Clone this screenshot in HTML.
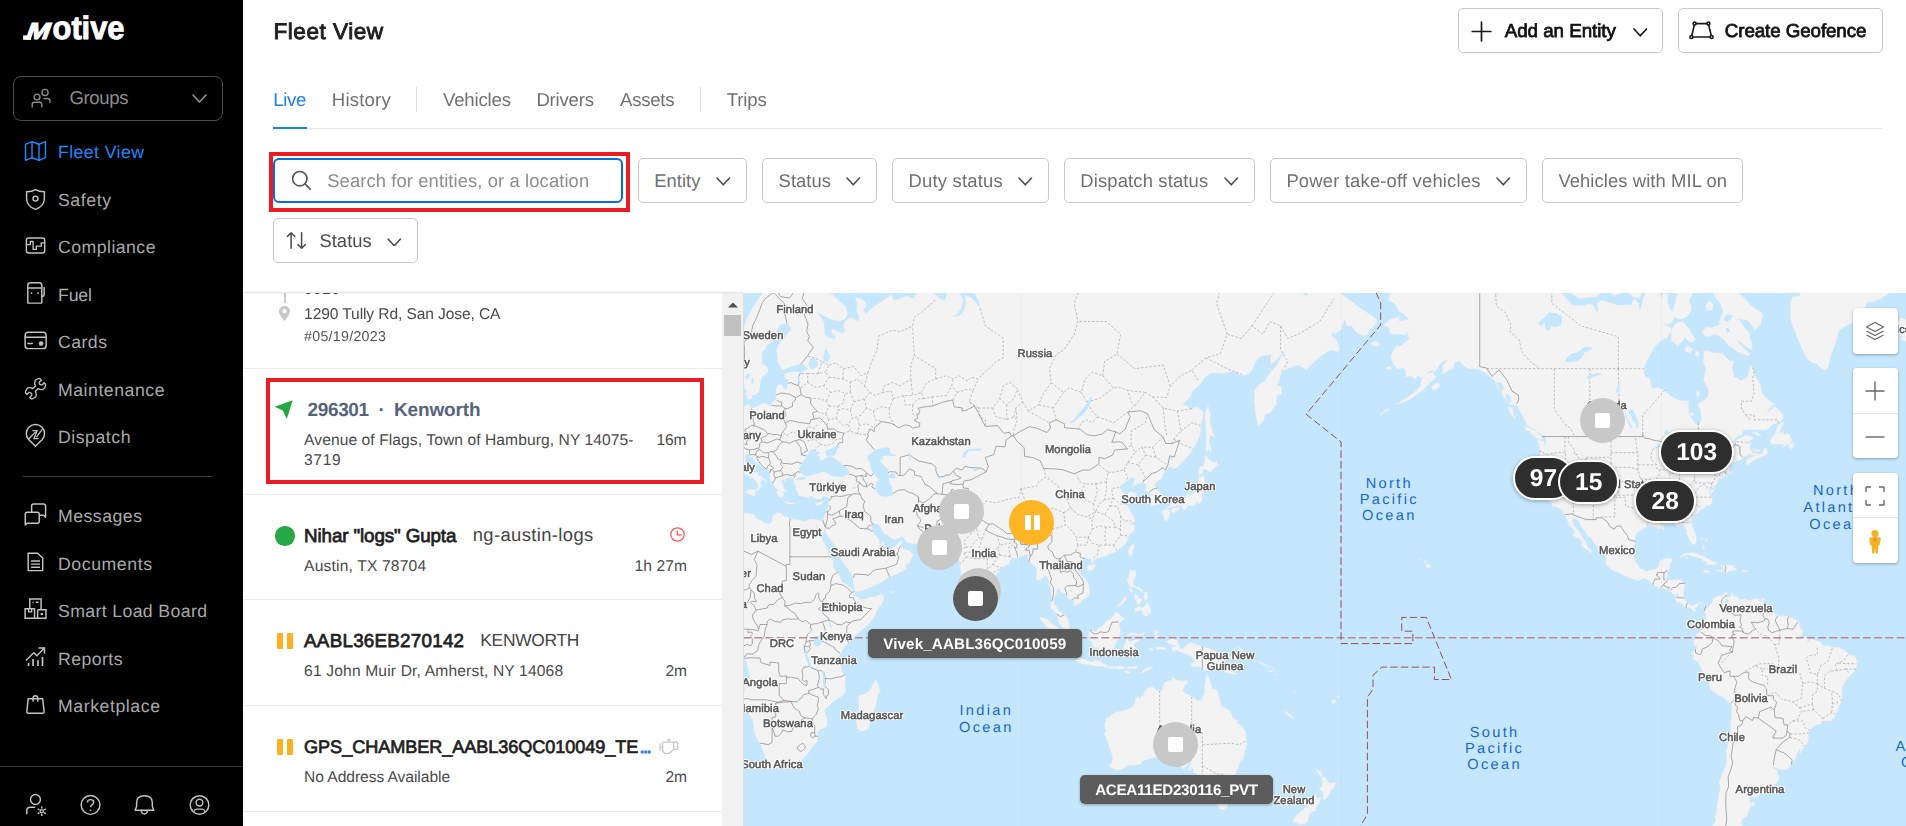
<!DOCTYPE html>
<html lang="en">
<head>
<meta charset="utf-8">
<title>Fleet View</title>
<style>
*{box-sizing:border-box;margin:0;padding:0}
html,body{width:1906px;height:826px;overflow:hidden;background:#fff}
body{background:linear-gradient(to right,#000 243px,#fff 243px)}
body{font-family:"Liberation Sans",sans-serif;color:#222;position:relative;text-rendering:geometricPrecision}
#root{position:absolute;left:0;top:0;width:1906px;height:826px;opacity:.9999}
.abs{position:absolute}
.t{position:absolute;white-space:nowrap;line-height:1}
/* sidebar */
#side{position:absolute;left:0;top:0;width:243px;height:826px;background:#000}
#side .nav{position:absolute;left:58px;font-size:17.6px;color:#a9a9a9;white-space:nowrap;line-height:20px;letter-spacing:.1px}
#side .ico{position:absolute;left:24px;width:23px;height:23px}
#side svg{display:block;overflow:visible}
#groups{position:absolute;left:13px;top:76px;width:210px;height:45px;border:1px solid #4d4d4d;border-radius:8px}
/* header */
.btn{position:absolute;border:1px solid #c9c9c9;border-radius:5px;background:#fff}
.ft{position:absolute;white-space:nowrap;font-size:18.4px;line-height:22px;color:#707070}
/* list */
#list{position:absolute;left:243px;top:293px;width:479px;height:533px;overflow:hidden;background:#fff}
#list .hr{position:absolute;left:0;width:479px;height:1px;background:#ebebeb}
#list .a{position:absolute;white-space:nowrap;font-size:15.4px;line-height:20px;color:#4a4a4a;letter-spacing:.15px}
#list .n{position:absolute;white-space:nowrap;font-size:18.6px;line-height:22px;color:#1f1f1f;font-weight:bold}
#list .m{position:absolute;white-space:nowrap;font-size:18.4px;line-height:22px;color:#444}
#scroll{position:absolute;left:722px;top:293px;width:21px;height:533px;background:#f1f1f1}
/* map */
#map{position:absolute;left:743px;top:293px;width:1163px;height:533px;overflow:hidden;background:#c5e7fe}
#map svg{position:absolute;left:0;top:0}
.ctl{position:absolute;left:1109.5px;width:45.5px;background:#fff;border-radius:4px;box-shadow:0 1px 3px rgba(0,0,0,.3)}
.badge{position:absolute;height:44px;border-radius:22px;background:rgba(45,45,45,.996);border:2px solid #fff;color:#fff;font-weight:bold;font-size:24.5px;line-height:42.4px;text-align:center;box-shadow:0 1px 4px rgba(0,0,0,.35)}
.mk{position:absolute;width:45px;height:45px;border-radius:50%;background:#c8c8c8}
.mk i{position:absolute;left:15px;top:15px;width:15px;height:15px;background:#fff;border-radius:2px}
.ml{position:absolute;transform:translate(-50%,-50%);white-space:nowrap;font-size:11.2px;line-height:12px;color:#585858;letter-spacing:.1px;
-webkit-text-stroke:.55px #585858;text-shadow:-1px -1px 0 #fff,1px -1px 0 #fff,-1px 1px 0 #fff,1px 1px 0 #fff,0 -1.3px 0 #fff,0 1.3px 0 #fff,-1.3px 0 0 #fff,1.3px 0 0 #fff,0 0 2px #fff}
.ml.r{transform:translate(-100%,-50%)}.ml.l{transform:translate(0,-50%)}
.tag{position:absolute;height:29.2px;border-radius:5px;background:rgba(91,91,91,.996);color:#fff;font-weight:bold;font-size:15.2px;line-height:31.4px;text-align:center;box-shadow:0 1px 3px rgba(0,0,0,.3);white-space:nowrap}
.badge,.tag,.ml{will-change:transform}
</style>
</head>
<body>
<div id="root">
<div id="side">
<svg class="abs" style="left:18px;top:10px" width="115" height="38" viewBox="0 0 115 38"><g fill="#fff" font-family="Liberation Sans, sans-serif" font-weight="bold"><rect x="5.1" y="25.4" width="8" height="4.4"/><text transform="translate(6.4 29.3) skewX(-20) scale(1.2 1)" font-size="23.3" stroke="#fff" stroke-width="1.1" stroke-linejoin="miter">M</text><text transform="translate(34.6 29.45) scale(.95 1)" font-size="32.6" letter-spacing="-.1" stroke="#fff" stroke-width=".9">otive</text></g></svg>
<div id="groups"></div>
<svg class="abs" style="left:31px;top:87px;" width="22" height="22" viewBox="0 0 22 22"><g fill="none" stroke="#8c8c8c" stroke-width="1.4" stroke-linecap="round"><circle cx="14" cy="5.5" r="3.1"/><circle cx="6" cy="10" r="2.9"/><path d="M1.2 20 V17.5 Q1.2 15.2 3.5 15.2 H8.5 Q10.8 15.2 10.8 17.5 V20"/><path d="M13 11.5 H16.5 Q19 11.5 19 14 V15.5"/></g></svg>
<div class="t" style="left:69.5px;top:87.3px;font-size:18.6px;line-height:22px;color:#8f8f8f;letter-spacing:-0.397px;">Groups</div>
<svg class="abs" style="left:192.0px;top:94.0px;" width="15" height="9" viewBox="0 0 15 9"><path d="M1 1 L7.5 8 L14 1" fill="none" stroke="#9a9a9a" stroke-width="1.5" stroke-linecap="round" stroke-linejoin="round"/></svg>
<div class="t" style="left:58px;top:141.9px;font-size:17.7px;line-height:21px;color:#1a8cff;letter-spacing:0.415px;">Fleet View</div>
<svg class="abs" style="left:24px;top:139.9px;" width="23" height="23" viewBox="0 0 23 23"><g fill="none" stroke="#1a8cff" stroke-width="1.45" stroke-linecap="round" stroke-linejoin="round"><path d="M1.5 4.3 L8 1.7 L15 4.3 L21.5 1.7 V17.7 L15 20.3 L8 17.7 L1.5 20.3 Z"/><path d="M8 1.7 V17.7 M15 4.3 V20.3"/></g></svg>
<div class="t" style="left:58px;top:189.9px;font-size:17.7px;line-height:21px;color:#ababab;letter-spacing:0.569px;">Safety</div>
<svg class="abs" style="left:24px;top:187.9px;" width="23" height="23" viewBox="0 0 23 23"><g fill="none" stroke="#c4c4c4" stroke-width="1.45" stroke-linecap="round" stroke-linejoin="round"><path d="M11.5 1.6 C9 3.1 6 3.7 2.6 3.7 V10.3 C2.6 16 6.8 19.8 11.5 21.4 C16.2 19.8 20.4 16 20.4 10.3 V3.7 C17 3.7 14 3.1 11.5 1.6 Z"/><circle cx="11.5" cy="10.6" r="2.5"/></g></svg>
<div class="t" style="left:58px;top:237.1px;font-size:17.7px;line-height:21px;color:#ababab;letter-spacing:0.455px;">Compliance</div>
<svg class="abs" style="left:24px;top:235.1px;" width="23" height="23" viewBox="0 0 23 23"><g fill="none" stroke="#c4c4c4" stroke-width="1.45" stroke-linecap="round" stroke-linejoin="round"><rect x="2.4" y="2.9" width="18.3" height="15.1" rx="2.2"/><path d="M2.4 9.6 H6.35 V6.5 H9.1 V14.3 H12.3 V11.1 H17.25 V7.8 H20.7" stroke-width="1.35" stroke-linejoin="miter"/></g></svg>
<div class="t" style="left:58px;top:284.7px;font-size:17.7px;line-height:21px;color:#ababab;letter-spacing:-0.141px;">Fuel</div>
<svg class="abs" style="left:24px;top:282.7px;" width="23" height="23" viewBox="0 0 23 23"><g fill="none" stroke="#c4c4c4" stroke-width="1.45" stroke-linecap="round" stroke-linejoin="round"><path d="M3.8 20.1 V2.3 Q3.8 -.2 6.3 -.2 H15.3 Q17.8 -.2 17.8 2.3 V20.1 Z"/><path d="M3.8 5 H17.8"/><path d="M17.8 13.4 Q20.15 13.4 20.15 10.9 V4.5"/><circle cx="7.6" cy="10.1" r=".9" fill="#c4c4c4" stroke="none"/><circle cx="14" cy="10.1" r=".9" fill="#c4c4c4" stroke="none"/></g></svg>
<div class="t" style="left:58px;top:332.1px;font-size:17.7px;line-height:21px;color:#ababab;letter-spacing:0.453px;">Cards</div>
<svg class="abs" style="left:24px;top:330.1px;" width="23" height="23" viewBox="0 0 23 23"><g fill="none" stroke="#c4c4c4" stroke-width="1.45" stroke-linecap="round" stroke-linejoin="round"><rect x="1.1" y="2.25" width="21.05" height="16.35" rx="3.2"/><path d="M1.1 7.15 H22.15"/><path d="M3.9 13.5 H8.3" stroke-width="1.6"/><circle cx="17.1" cy="13.5" r="2.3" fill="#c4c4c4" stroke="none"/></g></svg>
<div class="t" style="left:58px;top:379.7px;font-size:17.7px;line-height:21px;color:#ababab;letter-spacing:0.522px;">Maintenance</div>
<svg class="abs" style="left:24px;top:377.7px;" width="23" height="23" viewBox="0 0 23 23"><g fill="none" stroke="#c4c4c4" stroke-width="1.45" stroke-linecap="round" stroke-linejoin="round"><path d="M15.6 .4 L17.4 2.3 Q15 3.6 15.1 4.6 Q15 6 15.8 6.3 Q17 7.2 18 6.8 Q19.4 6.2 20 4.8 L21.6 6.3 Q21.8 8.4 20.7 9.7 Q19.9 11 18.7 11.6 Q16.2 11.9 14.2 10.6 L11.3 13.4 Q12.7 15.6 12.2 17.7 Q11.8 18.8 10.7 19.5 Q9.3 20.7 7.6 21 L5.6 19.4 Q7.6 18.3 7.8 17 Q7.9 15.8 7.1 15.2 Q6 14.2 4.9 14.5 Q3.7 15.1 3.1 16.5 L1.45 14.8 Q1.4 13 2.4 11.6 Q3.2 10.4 4.4 9.7 Q6.8 9.3 8.7 10.6 L11.6 7.9 Q10.3 6.3 10.7 4.65 Q10.8 3.2 11.4 2.3 Q13 .8 15.6 .4 Z" stroke-width="1.35"/></g></svg>
<div class="t" style="left:58px;top:427.1px;font-size:17.7px;line-height:21px;color:#ababab;letter-spacing:0.525px;">Dispatch</div>
<svg class="abs" style="left:24px;top:425.1px;" width="23" height="23" viewBox="0 0 23 23"><g fill="none" stroke="#c4c4c4" stroke-width="1.45" stroke-linecap="round" stroke-linejoin="round"><path d="M11.44 21.3 L4.6 14.6 A9.1 9.1 0 1 1 18.28 14.6 Z"/><path d="M8.9 5.65 H13.05 L10 13.6 H14 M4.9 13.8 L11.2 7.1 M12.6 11.8 L18.1 4.6" stroke-width="1.3" stroke-linejoin="miter"/></g></svg>
<div class="t" style="left:58px;top:506.1px;font-size:17.7px;line-height:21px;color:#ababab;letter-spacing:0.482px;">Messages</div>
<svg class="abs" style="left:24px;top:504.1px;" width="23" height="23" viewBox="0 0 23 23"><g fill="none" stroke="#c4c4c4" stroke-width="1.45" stroke-linecap="round" stroke-linejoin="round"><path d="M7.62 8.07 V2.1 Q7.62 .08 9.6 .08 H19.6 Q21.6 .08 21.6 2.1 V13.15 L19.6 11.16 H15.8"/><path d="M3.26 19.15 H13.25 Q15.25 19.15 15.25 17.15 V10.25 Q15.25 8.25 13.25 8.25 H3.27 Q1.27 8.25 1.27 10.25 V20.96 Z"/></g></svg>
<div class="t" style="left:58px;top:553.7px;font-size:17.7px;line-height:21px;color:#ababab;letter-spacing:0.566px;">Documents</div>
<svg class="abs" style="left:24px;top:551.7px;" width="23" height="23" viewBox="0 0 23 23"><g fill="none" stroke="#c4c4c4" stroke-width="1.45" stroke-linecap="round" stroke-linejoin="round"><path d="M4.17 1.2 H13.62 L18.7 6.1 V18.64 H4.17 Z" stroke-linejoin="miter"/><path d="M7.1 9 H16 M7.1 12.1 H16 M7.1 15.2 H16" stroke-width="1.4" stroke-linecap="butt"/></g></svg>
<div class="t" style="left:58px;top:601.1px;font-size:17.7px;line-height:21px;color:#ababab;letter-spacing:0.364px;">Smart Load Board</div>
<svg class="abs" style="left:24px;top:599.1px;" width="23" height="23" viewBox="0 0 23 23"><g fill="none" stroke="#c4c4c4" stroke-width="1.45" stroke-linecap="butt" stroke-linejoin="miter"><path d="M5.8 9.7 V-.1 H17.07 V10.8"/><path d="M1.09 9.7 H10.53 V19.15 H1.09 Z"/><path d="M13.62 10.8 H21.97 V19.15 H10.53"/><path d="M13.62 10.8 V19.15"/><path d="M4.54 9.9 V12.97 H7.62 V9.9" stroke-width="1.3"/><path d="M8.6 3.35 H9.6 M11.6 3.35 H14.5" stroke-width="1.5"/><circle cx="17.8" cy="15" r="1.3" fill="#c4c4c4" stroke="none"/></g></svg>
<div class="t" style="left:58px;top:648.7px;font-size:17.7px;line-height:21px;color:#ababab;letter-spacing:0.427px;">Reports</div>
<svg class="abs" style="left:24px;top:646.7px;" width="23" height="23" viewBox="0 0 23 23"><g fill="none" stroke="#c4c4c4" stroke-width="1.45" stroke-linecap="round" stroke-linejoin="round"><path d="M2.36 13 L9.8 5.74 L12.89 8.83 L20.16 1.3"/><path d="M14.9 1.05 H20.5 V6.1" stroke-linejoin="miter"/><path d="M4.54 19 V16.1 M9.08 19 V11.92 M13.98 19 V13.37 M18.52 19 V9.92" stroke-width="1.7" stroke-linecap="butt"/></g></svg>
<div class="t" style="left:58px;top:696.1px;font-size:17.7px;line-height:21px;color:#ababab;letter-spacing:0.566px;">Marketplace</div>
<svg class="abs" style="left:24px;top:694.1px;" width="23" height="23" viewBox="0 0 23 23"><g fill="none" stroke="#c4c4c4" stroke-width="1.45" stroke-linecap="round" stroke-linejoin="round"><path d="M4.17 4.8 H18.7 L20.1 17.6 Q20.2 19.15 18.6 19.15 H4.3 Q2.7 19.15 2.8 17.6 Z"/><path d="M9.08 7.16 V4.1 Q9.08 1.7 11.44 1.7 Q13.8 1.7 13.8 4.1 V7.16"/></g></svg>
<div class="abs" style="left:23px;top:476px;width:190px;height:1px;background:#3a3a3a"></div>
<div class="abs" style="left:0;top:765.5px;width:243px;height:1px;background:#3a3a3a"></div>
<svg class="abs" style="left:24.0px;top:792.5px;" width="23" height="23" viewBox="0 0 23 23"><g fill="none" stroke="#c4c4c4" stroke-width="1.45" stroke-linecap="round" stroke-linejoin="round"><circle cx="11.46" cy="6.45" r="4.95"/><path d="M2.8 21.2 V17.7 Q2.8 14.3 6.2 14.3 H11.2" stroke-linecap="butt"/><circle cx="17.76" cy="18.26" r="1.7" stroke-width="1.3"/><path d="M17.76 13.6 V15.6 M17.76 20.9 V22.9 M13.7 15.9 L15.45 16.9 M20.05 19.6 L21.8 20.6 M13.7 20.6 L15.45 19.6 M20.05 16.9 L21.8 15.9" stroke-width="1.5" stroke-linecap="butt"/></g></svg>
<svg class="abs" style="left:79.0px;top:792.5px;" width="23" height="23" viewBox="0 0 23 23"><g fill="none" stroke="#c4c4c4" stroke-width="1.45" stroke-linecap="round" stroke-linejoin="round"><circle cx="11.55" cy="11.95" r="9.4"/><path d="M8.4 9.4 Q8.4 6.6 11.55 6.6 Q14.7 6.6 14.7 9.2 Q14.7 10.8 13 11.8 Q11.55 12.6 11.55 14.3" stroke-linecap="butt"/><path d="M11.55 16.6 V18" stroke-width="1.6" stroke-linecap="butt"/></g></svg>
<svg class="abs" style="left:133.0px;top:792.5px;" width="23" height="23" viewBox="0 0 23 23"><g fill="none" stroke="#c4c4c4" stroke-width="1.45" stroke-linecap="round" stroke-linejoin="round"><path d="M2 17.2 H20.9 L19.3 13.6 V9.6 Q19.3 2.8 11.45 2.8 Q3.6 2.8 3.6 9.6 V13.6 Z"/><path d="M8.3 17.5 Q8.6 20.9 11.45 20.9 Q14.3 20.9 14.6 17.5"/></g></svg>
<svg class="abs" style="left:188.0px;top:792.5px;" width="23" height="23" viewBox="0 0 23 23"><g fill="none" stroke="#c4c4c4" stroke-width="1.45" stroke-linecap="round" stroke-linejoin="round"><circle cx="11.5" cy="11.95" r="9.3"/><circle cx="11.5" cy="9.6" r="3.4"/><path d="M6.3 18 Q6.6 16.1 8.8 16.1 H14.2 Q16.4 16.1 16.7 18"/></g></svg>
</div>
<div class="t" style="left:273.5px;top:17.5px;font-size:22.6px;line-height:27px;color:#1f1f1f;letter-spacing:0.502px;-webkit-text-stroke:0.9px #1f1f1f;">Fleet View</div>
<div class="btn" style="left:1458px;top:8.3px;width:204.5px;height:44.4px"></div>
<svg class="abs" style="left:1471px;top:20.5px;" width="21" height="21" viewBox="0 0 21 21"><path d="M10.5 1.2 V19.8 M1.2 10.5 H19.8" stroke="#1a1a1a" stroke-width="1.7" stroke-linecap="round"/></svg>
<div class="t" style="left:1504.7px;top:19.0px;font-size:18.8px;line-height:23px;color:#111;letter-spacing:-0.039px;-webkit-text-stroke:0.75px #111;">Add an Entity</div>
<svg class="abs" style="left:1632.75px;top:27.9px;" width="14.5" height="8.8" viewBox="0 0 14.5 8.8"><path d="M1 1 L7.25 7.8 L13.5 1" fill="none" stroke="#1a1a1a" stroke-width="1.7" stroke-linecap="round" stroke-linejoin="round"/></svg>
<div class="btn" style="left:1678px;top:8.3px;width:205px;height:44.4px"></div>
<svg class="abs" style="left:1689px;top:19px;" width="25" height="22" viewBox="0 0 25 22"><g fill="none" stroke="#1a1a1a" stroke-width="1.6"><path d="M6.3 4.6 H18.7 M19.6 5.8 L22.3 16.8 M21 18 H4 M2.7 16.8 L5.4 5.8"/><circle cx="5.6" cy="4.6" r="1.5"/><circle cx="19.4" cy="4.6" r="1.5"/><circle cx="22.6" cy="18" r="1.5"/><circle cx="2.4" cy="18" r="1.5"/></g></svg>
<div class="t" style="left:1724.8px;top:19.0px;font-size:18.8px;line-height:23px;color:#111;letter-spacing:-0.1px;-webkit-text-stroke:0.75px #111;">Create Geofence</div>
<div class="t" style="left:273.2px;top:88.8px;font-size:18.6px;line-height:22px;color:#1a7ff0;letter-spacing:-0.308px;">Live</div>
<div class="t" style="left:331.8px;top:88.8px;font-size:18.6px;line-height:22px;color:#707070;letter-spacing:0.19px;">History</div>
<div class="t" style="left:443px;top:88.8px;font-size:18.6px;line-height:22px;color:#707070;letter-spacing:-0.181px;">Vehicles</div>
<div class="t" style="left:536.4px;top:88.8px;font-size:18.6px;line-height:22px;color:#707070;letter-spacing:-0.215px;">Drivers</div>
<div class="t" style="left:620px;top:88.8px;font-size:18.6px;line-height:22px;color:#707070;letter-spacing:-0.242px;">Assets</div>
<div class="t" style="left:726.7px;top:88.8px;font-size:18.6px;line-height:22px;color:#707070;letter-spacing:-0.16px;">Trips</div>
<div class="abs" style="left:416px;top:87px;width:1px;height:25px;background:#e0e0e0"></div>
<div class="abs" style="left:700px;top:87px;width:1px;height:25px;background:#e0e0e0"></div>
<div class="abs" style="left:273px;top:128px;width:1610px;height:1px;background:#e8e8e8"></div>
<div class="abs" style="left:273px;top:126.6px;width:34px;height:2.4px;background:#1585f5"></div>
<div class="abs" style="left:273.2px;top:157.9px;width:349.6px;height:44.7px;border:2.1px solid #0a6ae0;border-radius:6px"></div>
<div class="abs" style="left:269px;top:152.05px;width:360.7px;height:59.7px;border:4.9px solid #ec1c24"></div>
<svg class="abs" style="left:290px;top:169px;" width="22" height="22" viewBox="0 0 22 22"><circle cx="9.8" cy="9.7" r="7.2" fill="none" stroke="#555" stroke-width="1.6"/><path d="M15 14.9 L20.2 20.1" stroke="#555" stroke-width="1.6" stroke-linecap="round"/></svg>
<div class="t" style="left:327.2px;top:170.0px;font-size:18.4px;line-height:22px;color:#8d8d8d;letter-spacing:0.102px;">Search for entities, or a location</div>
<div class="btn" style="left:638px;top:158px;width:109px;height:44.6px"></div>
<div class="t" style="left:654.2px;top:170.0px;font-size:18.4px;line-height:22px;color:#707070;letter-spacing:0.04px;">Entity</div>
<svg class="abs" style="left:716.35px;top:177.4px;" width="14.5" height="8.8" viewBox="0 0 14.5 8.8"><path d="M1 1 L7.25 7.8 L13.5 1" fill="none" stroke="#4d4d4d" stroke-width="1.6" stroke-linecap="round" stroke-linejoin="round"/></svg>
<div class="btn" style="left:762px;top:158px;width:114.5px;height:44.6px"></div>
<div class="t" style="left:778.6px;top:170.0px;font-size:18.4px;line-height:22px;color:#707070;letter-spacing:0.052px;">Status</div>
<svg class="abs" style="left:846.35px;top:177.4px;" width="14.5" height="8.8" viewBox="0 0 14.5 8.8"><path d="M1 1 L7.25 7.8 L13.5 1" fill="none" stroke="#4d4d4d" stroke-width="1.6" stroke-linecap="round" stroke-linejoin="round"/></svg>
<div class="btn" style="left:892px;top:158px;width:156.5px;height:44.6px"></div>
<div class="t" style="left:908.6px;top:170.0px;font-size:18.4px;line-height:22px;color:#707070;letter-spacing:0.2px;">Duty status</div>
<svg class="abs" style="left:1018.05px;top:177.4px;" width="14.5" height="8.8" viewBox="0 0 14.5 8.8"><path d="M1 1 L7.25 7.8 L13.5 1" fill="none" stroke="#4d4d4d" stroke-width="1.6" stroke-linecap="round" stroke-linejoin="round"/></svg>
<div class="btn" style="left:1064px;top:158px;width:190.6px;height:44.6px"></div>
<div class="t" style="left:1080.2px;top:170.0px;font-size:18.4px;line-height:22px;color:#707070;letter-spacing:0.162px;">Dispatch status</div>
<svg class="abs" style="left:1224.25px;top:177.4px;" width="14.5" height="8.8" viewBox="0 0 14.5 8.8"><path d="M1 1 L7.25 7.8 L13.5 1" fill="none" stroke="#4d4d4d" stroke-width="1.6" stroke-linecap="round" stroke-linejoin="round"/></svg>
<div class="btn" style="left:1270.3px;top:158px;width:256.4px;height:44.6px"></div>
<div class="t" style="left:1286.4px;top:170.0px;font-size:18.4px;line-height:22px;color:#707070;letter-spacing:0.191px;">Power take-off vehicles</div>
<svg class="abs" style="left:1496.25px;top:177.4px;" width="14.5" height="8.8" viewBox="0 0 14.5 8.8"><path d="M1 1 L7.25 7.8 L13.5 1" fill="none" stroke="#4d4d4d" stroke-width="1.6" stroke-linecap="round" stroke-linejoin="round"/></svg>
<div class="btn" style="left:1542px;top:158px;width:200.5px;height:44.6px"></div>
<div class="t" style="left:1558.4px;top:170.0px;font-size:18.4px;line-height:22px;color:#707070;letter-spacing:0.091px;">Vehicles with MIL on</div>
<div class="btn" style="left:273px;top:218px;width:144.8px;height:44.6px"></div>
<svg class="abs" style="left:285px;top:230px;" width="23" height="21" viewBox="0 0 23 21"><g fill="none" stroke="#505050" stroke-width="1.55" stroke-linecap="round" stroke-linejoin="round"><path d="M6.1 18.3 V2.9 M2.4 6.5 L6.1 2.8 L9.8 6.5"/><path d="M16.6 2.8 V18.3 M12.9 14.6 L16.6 18.3 L20.3 14.6"/></g></svg>
<div class="t" style="left:319.4px;top:230.0px;font-size:18.4px;line-height:22px;color:#4d4d4d;letter-spacing:0.052px;">Status</div>
<svg class="abs" style="left:387.25px;top:237.6px;" width="14.5" height="8.8" viewBox="0 0 14.5 8.8"><path d="M1 1 L7.25 7.8 L13.5 1" fill="none" stroke="#4d4d4d" stroke-width="1.6" stroke-linecap="round" stroke-linejoin="round"/></svg>
<div id="list">
<div class="t" style="left:61px;top:-12.9px;font-size:15.6px;line-height:19px;color:#4a4a4a;letter-spacing:0.432px;">0020</div>
<div class="abs" style="left:40.60000000000002px;top:0;width:2px;height:9.5px;background:#c9c9c9"></div>
<svg class="abs" style="left:35px;top:11.5px;" width="13" height="17" viewBox="0 0 13 17"><path d="M6.5 16.2 C3 11.6 1 9 1 6.3 A5.5 5.5 0 0 1 12 6.3 C12 9 10 11.6 6.5 16.2 Z" fill="#c9c9c9"/><circle cx="6.5" cy="6.2" r="2.1" fill="#fff"/></svg>
<div class="t" style="left:61.10000000000002px;top:12.4px;font-size:15.6px;line-height:19px;color:#4a4a4a;letter-spacing:-0.114px;">1290 Tully Rd, San Jose, CA</div>
<div class="t" style="left:61.10000000000002px;top:35.7px;font-size:14.2px;line-height:17px;color:#555;letter-spacing:0.279px;">#05/19/2023</div>
<div class="hr" style="top:75px"></div>
<div class="abs" style="left:23px;top:84.60000000000002px;width:438.1px;height:106.2px;border:4.9px solid #ec1c24"></div>
<svg class="abs" style="left:31px;top:107px;" width="21" height="20" viewBox="0 0 21 20"><path d="M18.7 .3 L.7 6.8 L8.8 10.6 L12.8 18.9 Z" fill="#28a745"/></svg>
<div class="t" style="left:64.60000000000002px;top:105.7px;font-size:19px;line-height:23px;color:#55647a;font-weight:bold;letter-spacing:-0.381px;">296301</div>
<div class="t" style="left:135.39999999999998px;top:105.7px;font-size:19px;line-height:23px;color:#55647a;font-weight:bold;">·</div>
<div class="t" style="left:151px;top:105.7px;font-size:19px;line-height:23px;color:#55647a;font-weight:bold;letter-spacing:-0.144px;">Kenworth</div>
<div class="t" style="left:61.10000000000002px;top:138.2px;font-size:15.6px;line-height:19px;color:#4a4a4a;letter-spacing:0.082px;">Avenue of Flags, Town of Hamburg, NY 14075-</div>
<div class="t" style="left:61.10000000000002px;top:158.1px;font-size:15.6px;line-height:19px;color:#4a4a4a;letter-spacing:0.599px;">3719</div>
<div class="t" style="left:413.4px;top:138.2px;font-size:15.6px;line-height:19px;color:#4a4a4a;letter-spacing:-0.122px;">16m</div>
<div class="hr" style="top:201px"></div>
<div class="abs" style="left:32.19999999999999px;top:233.20000000000005px;width:19.4px;height:19.4px;border-radius:50%;background:#28a745"></div>
<div class="t" style="left:61.10000000000002px;top:230.7px;font-size:18.8px;line-height:23px;color:#1f1f1f;letter-spacing:-0.12px;-webkit-text-stroke:0.75px #1f1f1f;">Nihar "logs" Gupta</div>
<div class="t" style="left:229.7px;top:231.2px;font-size:18.4px;line-height:22px;color:#444;letter-spacing:0.39px;">ng-austin-logs</div>
<svg class="abs" style="left:425.5px;top:233.39999999999998px;" width="17" height="17" viewBox="0 0 17 17"><circle cx="8.5" cy="8.5" r="6.7" fill="none" stroke="#ff5558" stroke-width="1.25"/><path d="M8.3 4.7 V8.9 H12.8" fill="none" stroke="#ff5558" stroke-width="1.35"/></svg>
<div class="t" style="left:61.10000000000002px;top:264.1px;font-size:15.6px;line-height:19px;color:#4a4a4a;letter-spacing:0.176px;">Austin, TX 78704</div>
<div class="t" style="left:391.4px;top:264.1px;font-size:15.6px;line-height:19px;color:#4a4a4a;letter-spacing:0.117px;">1h 27m</div>
<div class="hr" style="top:306.4px"></div>
<div class="abs" style="left:33.80000000000001px;top:340.20000000000005px;width:6.2px;height:15.4px;background:#fdb022;border-radius:1px"></div><div class="abs" style="left:44px;top:340.20000000000005px;width:6.2px;height:15.4px;background:#fdb022;border-radius:1px"></div>
<div class="t" style="left:61.10000000000002px;top:336.1px;font-size:18.8px;line-height:23px;color:#1f1f1f;letter-spacing:0.253px;-webkit-text-stroke:0.75px #1f1f1f;">AABL36EB270142</div>
<div class="t" style="left:237.3px;top:337.3px;font-size:17.4px;line-height:21px;color:#444;letter-spacing:-0.292px;">KENWORTH</div>
<div class="t" style="left:61.10000000000002px;top:369.3px;font-size:15.6px;line-height:19px;color:#4a4a4a;letter-spacing:0.161px;">61 John Muir Dr, Amherst, NY 14068</div>
<div class="t" style="left:422.4px;top:369.3px;font-size:15.6px;line-height:19px;color:#4a4a4a;letter-spacing:-0.072px;">2m</div>
<div class="hr" style="top:412.4px"></div>
<div class="abs" style="left:33.80000000000001px;top:446.20000000000005px;width:6.2px;height:15.4px;background:#fdb022;border-radius:1px"></div><div class="abs" style="left:44px;top:446.20000000000005px;width:6.2px;height:15.4px;background:#fdb022;border-radius:1px"></div>
<div class="t" style="left:61.10000000000002px;top:442.8px;font-size:18.1px;line-height:22px;color:#1f1f1f;letter-spacing:-0.059px;-webkit-text-stroke:0.72px #1f1f1f;">GPS_CHAMBER_AABL36QC010049_TE</div>
<div class="t" style="left:396.5px;top:442.3px;font-size:18.8px;line-height:23px;color:#1a73e8;letter-spacing:-1.704px;-webkit-text-stroke:0.75px #1a73e8;">...</div>
<svg class="abs" style="left:416px;top:445px;" width="22" height="17" viewBox="0 0 22 17"><g fill="none" stroke="#c9c9c9" stroke-width="1.4" stroke-linejoin="round"><path d="M14.64 4.14 H5 Q3.63 4.14 3.63 5.5 V13.03 L5.75 15.36 H10.4 L14.64 11.34 Z"/><path d="M14.64 4.14 H17.4 Q18.67 4.14 18.67 5.4 V10.1 Q18.67 11.34 17.4 11.34 H14.64"/><path d="M9.77 4.14 V1.5 M8.2 1.4 H11.5 M1.08 5.2 V12.8 M1.08 9.2 H3.63"/></g></svg>
<div class="t" style="left:61.10000000000002px;top:475.3px;font-size:15.6px;line-height:19px;color:#4a4a4a;letter-spacing:-0.058px;">No Address Available</div>
<div class="t" style="left:422.4px;top:475.3px;font-size:15.6px;line-height:19px;color:#4a4a4a;letter-spacing:-0.072px;">2m</div>
<div class="hr" style="top:518px"></div>
</div>
<div id="scroll"><svg class="abs" style="left:5.5px;top:8.5px" width="10" height="6" viewBox="0 0 10 6"><path d="M0 5.6 L5 .4 L10 5.6 Z" fill="#505050"/></svg><div class="abs" style="left:2.2px;top:22.2px;width:16.6px;height:20.8px;background:#c1c1c1"></div></div>
<div id="map">
<svg width="1163" height="533" viewBox="0 0 1163 533" font-family="Liberation Sans, sans-serif">
<rect width="1163" height="533" fill="#c5e7fe"/>
<path d="M-24.2 61.0L-13.6 49.4L-4.7 42.9L-1.1 37.9L1.7 32.0L3.5 25.9L7.1 19.6L10.6 13.2L14.9 6.5L19.2 0.6L23.8 -5.4L29.1 -9.5L39.8 -15.9L50.4 -19.1L59.3 -18.0L66.4 -9.5L70.0 -6.4L75.3 -3.4L82.4 -1.4L89.6 1.6L96.7 8.4L102.0 13.2L104.1 17.8L104.5 22.3L101.3 26.8L94.9 28.1L87.8 25.9L81.7 23.2L76.0 20.5L73.2 18.2L77.5 24.1L81.0 29.4L81.4 35.4L81.7 41.3L86.0 44.6L91.3 46.2L93.1 43.7L90.3 42.1L88.1 37.9L89.6 35.8L94.9 38.4L99.5 40.4L102.0 37.9L100.2 32.0L102.4 27.7L107.3 24.6L112.7 26.8L115.5 29.0L115.9 23.2L113.7 17.8L114.1 10.3L112.0 4.6L118.0 5.5L122.6 9.4L123.3 13.2L119.8 16.9L123.3 20.5L128.7 15.0L135.8 10.3L142.9 5.5L148.2 1.6L151.1 7.5L157.1 5.5L164.2 2.6L169.6 5.5L174.2 0.6L174.9 -6.4L187.3 -2.4L192.7 1.6L198.0 6.5L202.6 6.5L203.3 1.6L198.4 -9.5L196.2 -25.7L203.3 -43.2L215.8 -40.8L216.8 -25.7L215.1 -9.5L216.8 0.6L220.4 7.5L218.3 15.0L213.3 21.4L208.7 23.2L215.8 23.2L220.4 17.8L223.2 10.3L221.8 2.6L228.2 4.6L233.6 10.3L237.1 15.0L236.0 8.4L231.8 0.6L224.7 -1.4L221.1 -9.5L222.9 -25.7L228.2 -37.2L242.4 -43.2L278.0 -76.0L313.6 -90.7L331.3 -106.6L359.8 -55.7L384.7 -43.2L409.6 -49.4L420.2 -20.2L438.0 -25.7L455.8 -39.6L491.3 -20.2L526.9 -9.5L532.2 -4.4L544.7 -5.4L555.3 -8.5L560.0 0.6L563.5 3.1L565.6 -4.4L564.6 -10.6L573.1 -8.5L583.8 -8.0L590.9 -3.4L598.0 0.8L603.3 4.6L608.7 8.4L615.8 14.1L622.9 18.7L630.0 23.2L634.6 27.7L631.8 32.0L626.4 37.1L624.0 42.1L621.1 42.9L615.8 41.3L612.2 37.9L608.7 32.9L603.7 32.9L601.6 25.9L599.4 32.9L598.0 37.1L592.7 40.4L589.1 39.2L588.4 42.9L592.7 45.4L595.5 51.8L596.2 56.4L595.2 58.8L587.3 57.2L578.4 62.5L571.3 69.2L563.5 76.4L555.3 72.1L548.2 74.3L542.9 76.8L538.6 77.1L537.6 82.7L535.8 89.5L534.0 91.5L538.3 94.2L538.6 101.3L534.0 101.9L533.3 108.9L534.4 110.1L526.9 119.8L522.3 121.0L520.8 127.4L515.2 133.1L514.4 129.7L512.7 121.0L511.2 108.9L511.6 97.4L516.2 90.9L521.6 88.2L526.2 81.3L530.4 75.7L533.6 72.8L537.6 64.8L542.9 57.2L537.6 61.8L534.0 67.0L528.0 71.4L527.6 66.3L528.3 61.8L521.6 62.5L516.2 64.0L512.7 69.2L509.1 77.1L507.3 79.9L502.0 82.0L496.7 82.0L494.2 79.2L487.8 78.5L480.7 80.6L475.3 79.9L467.2 80.3L461.1 85.5L457.6 90.9L450.4 97.4L446.9 103.9L441.6 110.1L439.1 110.7L445.1 113.8L446.9 116.8L450.4 115.6L454.0 113.8L456.8 115.6L460.4 119.2L459.7 125.1L457.9 132.5L457.6 138.1L456.8 143.6L453.3 150.0L450.4 155.8L445.1 162.9L440.1 168.4L434.4 174.3L430.9 175.8L427.3 173.4L424.5 176.3L422.7 177.7L420.2 181.1L419.2 184.8L415.2 188.1L411.7 190.9L411.3 192.7L414.2 195.0L417.7 201.8L418.4 206.6L417.4 210.1L414.9 211.4L412.0 212.3L407.8 213.6L407.1 208.8L408.1 205.8L408.1 202.2L406.4 199.1L403.2 198.6L401.7 197.3L403.5 191.8L400.3 189.0L395.3 190.4L389.3 194.1L391.1 188.6L392.5 185.8L388.2 184.4L383.2 189.0L377.6 192.3L376.5 194.6L379.3 197.7L381.1 201.3L383.2 201.8L387.2 198.6L393.6 200.4L393.2 202.7L388.2 204.0L385.7 206.6L382.2 211.0L385.4 214.0L387.9 219.6L391.4 225.1L391.4 228.4L386.4 230.9L390.4 232.1L391.8 232.5L391.4 236.2L390.0 239.0L387.2 240.6L384.7 245.4L383.2 250.2L380.0 253.3L377.9 254.5L374.0 258.4L372.9 258.8L366.9 261.1L364.0 262.6L361.6 263.4L356.2 264.9L350.9 266.8L350.2 270.3L348.8 269.9L348.0 265.7L342.7 265.3L338.4 268.0L337.0 270.6L334.2 275.2L336.7 279.7L340.2 284.1L342.7 286.0L345.6 291.9L346.6 297.4L346.3 301.7L342.0 305.7L338.8 307.2L337.4 309.7L332.4 312.6L330.6 313.3L331.3 309.0L330.6 306.8L326.0 306.1L324.2 303.9L322.4 301.0L317.1 298.5L316.8 295.9L313.6 296.3L313.6 301.0L310.7 305.4L311.1 310.8L313.9 314.0L315.3 318.3L318.9 319.8L321.7 322.3L324.9 325.1L325.6 329.1L326.0 334.0L328.5 339.0L326.0 339.4L321.4 335.8L318.2 333.3L315.7 329.1L314.6 324.8L314.3 321.2L312.5 319.8L310.0 316.5L307.5 315.8L307.5 311.9L308.6 307.5L308.2 301.7L308.2 297.4L306.4 291.9L305.4 286.4L305.0 284.5L302.5 282.6L300.0 284.5L296.8 287.1L293.3 286.4L293.3 280.8L294.0 277.0L291.2 273.3L288.7 270.6L286.2 268.4L284.4 262.6L281.6 261.5L279.8 263.0L276.2 264.5L272.7 265.3L270.2 264.9L267.3 266.5L266.6 269.1L265.6 271.4L263.1 272.2L260.2 274.0L256.7 277.8L254.2 280.0L250.6 283.8L247.8 285.2L246.0 287.1L243.5 288.9L242.8 293.7L243.5 297.0L242.1 301.0L241.7 304.6L242.1 307.2L240.0 307.5L238.5 310.8L236.0 312.2L233.6 315.1L230.0 311.9L228.9 308.3L227.5 303.6L224.7 299.2L224.0 297.4L221.5 290.8L220.4 288.2L218.6 282.6L216.8 275.2L216.8 269.5L216.1 266.8L216.1 263.0L214.7 266.8L210.4 268.7L206.9 267.6L204.0 264.9L203.3 263.0L205.8 261.9L208.0 260.3L205.1 260.3L201.9 259.2L200.5 257.2L198.0 256.4L197.3 254.1L196.2 252.9L194.4 250.6L189.1 251.0L183.8 251.4L176.7 251.8L173.1 251.0L167.8 250.6L163.5 249.4L161.7 246.2L160.0 243.8L158.2 243.4L155.3 245.4L151.8 246.2L148.2 245.0L144.7 242.2L141.1 240.6L138.6 236.6L136.5 232.1L132.2 230.5L131.5 230.9L128.7 232.5L128.7 235.0L130.4 238.6L131.5 241.4L134.7 245.0L136.5 247.0L136.5 250.2L138.6 252.9L138.6 250.2L140.0 247.8L141.5 251.0L140.4 253.7L142.2 255.7L145.0 255.3L148.2 255.7L151.4 254.1L154.6 251.0L157.5 248.2L158.5 247.0L158.5 252.1L159.2 254.1L162.4 256.8L166.4 257.6L170.6 261.9L167.8 266.5L166.4 269.9L163.5 271.4L163.2 275.2L158.9 278.9L154.6 280.4L150.4 282.6L143.6 285.6L139.3 288.9L132.9 291.9L126.9 294.8L118.0 298.1L112.7 298.5L111.6 296.3L110.5 290.8L109.8 285.2L108.0 280.8L104.8 275.9L102.0 272.2L97.4 265.7L96.0 260.7L93.1 255.7L90.3 251.0L87.8 247.0L84.2 242.2L82.4 239.8L82.1 234.1L80.3 239.8L79.8 241.2L77.5 239.4L75.3 236.2L73.7 232.3L72.8 226.7L78.2 227.6L80.0 226.7L81.4 223.8L82.4 220.4L84.2 215.7L85.3 213.2L85.6 208.8L86.7 204.0L83.5 204.0L81.0 203.1L77.8 205.8L73.6 206.2L68.2 203.1L67.2 202.7L66.1 205.3L61.5 204.0L58.3 203.1L55.4 202.2L54.7 198.2L52.2 196.4L53.3 193.2L50.8 190.9L51.2 188.6L50.4 185.8L46.9 184.4L43.3 185.3L42.3 188.6L39.4 185.8L38.4 189.0L40.1 192.3L39.4 193.6L43.3 197.7L43.3 199.3L41.9 198.2L40.1 198.2L40.5 200.9L40.1 204.4L38.0 204.4L35.2 203.1L33.7 198.6L35.2 196.4L33.0 195.9L31.6 193.6L29.8 190.4L27.0 186.7L27.0 182.5L27.0 179.6L25.2 177.7L22.4 176.3L16.3 171.9L12.0 168.9L9.6 163.4L7.4 165.5L6.0 161.9L4.6 160.9L1.7 162.4L2.4 165.0L1.7 168.4L6.0 171.4L7.8 176.3L11.7 179.2L15.6 179.6L14.9 182.0L18.1 183.4L21.6 185.8L23.8 188.1L23.4 189.5L21.6 187.7L19.2 186.3L17.0 190.0L18.8 193.2L17.0 194.6L15.2 198.2L13.6 197.3L14.2 195.0L15.6 193.2L13.5 188.6L10.6 185.3L8.5 184.8L6.4 183.0L2.8 181.8L1.4 180.1L-0.0 178.7L-4.7 174.8L-6.4 169.4L-11.8 167.4L-24.2 172.9ZM-24.2 201.3L-10.0 200.9L-2.9 202.0L-4.3 204.9L-4.3 207.5L-2.5 210.1L-3.6 212.3L-6.1 215.7L-2.9 217.0L-1.1 218.7L1.7 220.2L4.9 220.0L11.7 222.1L13.1 225.5L17.0 227.1L22.0 230.0L26.3 230.9L29.1 228.4L29.3 223.4L32.3 220.9L35.2 220.0L38.5 220.4L40.5 223.0L43.3 223.4L47.4 225.7L54.7 226.5L60.9 228.6L64.3 227.1L66.1 225.9L71.1 225.9L72.8 226.7L73.7 232.3L73.0 233.7L74.1 235.8L75.7 238.8L78.2 243.2L78.7 245.2L80.0 247.8L82.1 251.8L84.2 256.4L85.3 256.4L84.6 259.2L88.1 263.0L90.3 267.6L90.3 272.9L90.8 274.8L92.4 277.8L94.9 278.9L96.7 283.4L98.3 287.8L100.9 290.0L103.8 291.2L107.3 294.8L110.0 297.4L112.0 299.2L112.0 301.4L109.5 302.5L111.4 302.5L112.7 303.4L118.0 306.6L123.3 305.4L126.9 304.3L132.9 303.6L137.6 301.4L140.2 301.6L140.8 306.6L139.0 310.1L135.2 315.5L133.3 319.2L130.6 325.0L126.9 329.8L123.3 333.3L119.2 336.7L117.3 338.0L109.3 345.2L105.9 349.9L103.4 352.2L100.6 355.4L99.0 358.4L97.0 362.2L96.0 365.7L97.7 368.2L98.1 371.5L97.7 373.6L98.4 375.8L99.2 379.7L100.9 380.8L102.4 382.3L102.0 390.6L102.4 395.0L102.7 398.0L99.9 402.4L93.6 406.5L89.2 409.1L87.1 412.1L82.1 416.0L81.4 418.5L82.8 421.5L83.5 424.2L84.2 427.7L84.2 432.3L82.8 434.3L77.8 436.2L73.9 439.6L75.0 441.0L75.0 443.2L73.7 449.4L72.1 451.0L68.4 455.3L66.3 459.0L63.1 462.5L57.2 468.4L53.6 471.0L49.2 472.5L46.4 473.5L41.2 472.9L36.8 473.5L29.1 476.1L26.4 474.4L23.8 474.2L23.4 472.3L21.6 468.4L23.1 465.5L21.6 462.1L17.9 452.8L16.5 450.2L11.9 442.4L11.0 435.9L9.6 427.9L9.6 426.9L7.6 423.5L4.2 416.6L1.4 411.0L-0.2 406.3L1.2 398.7L2.4 392.5L5.6 389.2L7.1 383.4L4.9 375.4L3.7 369.8L1.9 365.7L1.4 363.8L0.1 361.1L-2.9 358.2L-8.2 351.1L-24.2 351.1ZM133.3 387.0L135.4 391.7L136.8 397.6L137.6 401.5L135.1 399.8L134.4 403.5L133.6 409.6L131.5 416.6L129.9 421.5L128.0 427.3L126.2 432.7L125.1 435.9L121.2 437.4L118.5 438.2L114.4 435.9L113.2 429.4L112.0 424.2L113.4 421.2L115.3 417.7L116.0 412.8L115.2 407.2L116.0 402.4L119.1 401.6L122.6 400.5L125.8 398.0L128.3 395.0L129.0 392.5L131.5 388.8ZM242.4 309.0L245.6 311.9L247.1 313.7L249.0 317.3L248.5 320.8L246.0 322.3L244.6 322.8L242.8 322.3L241.9 319.4L241.7 315.5L242.1 311.9ZM465.0 112.6L467.5 121.0L467.2 129.7L469.3 138.1L472.5 144.7L467.2 141.9L466.1 148.9L468.2 155.3L467.9 159.4L465.4 156.3L462.9 159.9L462.9 154.2L463.2 146.3L463.2 138.1L462.2 129.7L461.8 123.9L462.9 118.0ZM462.5 161.9L466.4 167.0L471.1 169.4L474.6 167.9L473.9 171.4L475.7 172.9L471.4 174.3L467.5 179.2L462.5 176.3L459.0 177.2L460.0 180.1L456.1 182.0L455.4 178.2L457.2 173.4L460.4 173.4L461.8 167.9L461.8 163.4ZM460.8 182.0L461.5 186.3L462.9 190.4L461.1 196.4L459.3 198.2L459.3 202.2L458.6 208.0L455.4 211.2L454.7 208.8L452.9 210.1L451.9 212.7L449.4 212.7L445.1 212.7L444.0 211.4L444.8 214.0L440.8 217.7L438.4 214.0L439.4 212.7L434.4 212.7L429.1 214.0L423.8 215.3L425.2 213.6L429.8 209.3L435.2 208.8L439.1 208.0L441.6 208.4L441.9 205.3L444.0 203.1L444.0 200.9L446.2 200.0L445.5 203.1L448.7 201.8L452.2 198.2L454.0 195.0L455.1 192.3L454.7 188.6L455.8 184.8L456.8 183.0L458.6 184.4ZM429.1 215.7L432.7 214.5L436.6 214.5L435.2 218.3L432.7 217.5L430.9 220.9L428.8 218.3L427.3 217.9ZM423.4 215.7L426.3 217.0L427.0 219.6L425.2 226.3L422.7 228.0L420.9 226.7L420.9 223.0L419.2 220.9L418.8 218.3L420.9 217.0ZM390.0 251.0L391.8 252.1L390.4 256.1L389.6 259.9L387.9 263.8L385.7 261.5L385.0 258.0L387.2 253.7L388.2 252.1ZM351.6 271.0L352.7 272.9L350.9 275.9L347.3 278.2L344.5 277.0L344.1 274.4L346.3 271.8L349.1 271.4ZM386.8 277.0L390.4 277.4L392.5 277.4L392.8 282.6L390.4 287.1L390.4 291.5L392.8 293.4L396.4 294.1L399.2 297.4L399.2 299.2L396.8 297.4L393.9 295.5L390.7 294.1L386.8 294.5L386.8 291.9L385.0 290.8L384.0 285.6L385.7 285.2L386.1 280.8ZM386.1 295.5L388.9 295.9L390.0 298.5L388.9 300.3L387.5 298.5ZM404.2 309.0L407.1 313.7L408.1 318.0L406.7 321.6L404.9 319.0L403.9 324.1L399.6 321.6L399.6 318.3L396.8 316.9L392.1 319.4L392.1 315.5L396.8 313.3L398.2 315.1L401.4 313.7L403.2 311.9ZM400.0 299.2L403.5 299.2L404.9 303.9L402.4 307.9L401.7 305.0L400.3 303.2L402.1 301.7ZM393.2 306.5L395.7 304.6L397.5 306.1L398.9 303.9L398.9 307.5L396.8 310.4L395.3 311.5L393.6 309.0ZM391.4 301.4L395.7 302.5L394.6 305.4L391.8 306.5ZM382.9 303.2L383.6 306.1L379.3 310.8L374.7 314.4L374.7 312.9L378.3 309.0L381.8 303.9ZM347.9 336.5L350.2 338.3L353.4 338.7L354.1 335.5L359.4 333.0L363.3 328.3L366.9 326.2L370.4 322.6L373.3 319.0L376.5 321.2L377.9 323.2L381.8 325.5L378.6 328.3L377.2 328.7L376.1 332.3L377.6 336.2L377.2 340.4L381.1 340.4L376.8 341.2L375.8 346.1L373.3 348.6L372.2 352.2L371.2 355.7L370.4 356.8L365.5 356.1L365.1 356.5L359.8 355.4L355.5 356.5L355.2 354.7L349.8 354.3L349.5 350.0L345.9 346.1L346.3 344.0L345.2 341.2L345.6 340.4ZM296.8 324.1L303.2 325.5L307.5 328.7L308.9 330.5L312.8 333.3L316.4 336.5L319.6 338.0L322.4 340.4L325.6 341.9L327.1 344.7L329.6 347.9L329.9 351.1L333.5 352.5L334.9 354.7L334.5 359.3L334.2 364.7L332.4 363.6L329.9 363.9L328.8 365.0L327.4 362.5L321.7 357.5L317.1 352.9L314.8 347.4L310.4 342.9L309.3 338.0L305.4 335.5L303.6 333.3L299.7 329.2L296.8 325.5ZM332.0 350.0L334.9 349.7L337.4 353.2L336.7 355.0L334.2 353.2ZM332.0 368.2L334.9 365.0L337.7 365.7L343.1 366.4L344.1 367.9L350.5 368.8L352.3 366.8L354.4 367.9L358.4 368.6L358.7 369.7L363.3 371.5L364.8 373.3L364.8 375.1L359.8 373.6L352.7 373.3L349.1 372.2L343.8 371.5L336.7 370.4L336.7 369.0L333.1 368.4ZM365.1 373.1L369.4 373.3L372.9 373.6L372.6 375.8L369.0 375.2L367.2 375.6L365.1 374.0ZM373.3 374.0L377.2 372.9L381.8 374.0L381.1 375.4L376.8 376.0L373.3 376.3ZM384.0 373.8L388.2 374.0L395.3 373.3L394.6 375.1L389.3 375.8L384.0 375.6ZM381.1 377.9L384.7 377.4L387.5 379.7L385.0 380.8L381.8 379.0ZM397.1 380.8L400.3 377.6L402.8 375.1L410.6 374.0L407.8 376.1L402.4 378.3L399.6 380.5ZM403.2 338.3L401.0 340.8L400.0 342.6L395.3 342.2L390.0 342.2L386.4 342.2L385.0 347.2L387.3 349.0L390.4 347.2L395.3 346.1L396.8 347.4L393.6 349.3L390.7 350.8L391.4 353.2L392.8 354.7L393.9 358.2L393.2 360.7L391.8 361.4L390.4 360.4L390.4 358.4L389.3 356.5L388.2 353.6L386.1 354.7L386.1 357.2L385.7 360.0L386.1 363.9L382.9 363.9L382.5 362.2L383.2 358.2L382.9 356.8L381.1 356.5L380.4 354.0L381.8 351.1L382.2 348.6L384.0 344.4L384.7 341.5L387.5 339.4L391.8 340.4L395.3 340.8L398.9 340.8L401.7 338.7ZM411.7 336.2L413.1 338.3L415.6 338.7L413.8 341.2L416.0 342.9L414.2 346.8L412.8 345.1L412.8 342.6L411.3 340.4ZM413.1 354.3L418.4 354.0L423.1 355.0L423.1 356.8L418.4 356.3L413.1 356.1ZM406.0 355.4L409.6 355.0L410.3 356.8L407.4 357.7L406.0 356.5ZM424.8 347.2L429.1 345.4L434.4 347.2L435.2 351.1L437.3 355.7L439.8 356.1L443.3 351.8L448.0 349.3L452.2 351.1L458.3 352.9L462.9 354.7L468.6 356.6L472.1 357.9L476.4 362.5L480.7 365.0L483.5 366.4L483.5 368.1L480.7 367.9L481.4 370.7L484.9 374.7L488.8 376.5L491.3 379.4L494.2 380.8L493.1 381.9L487.8 380.8L482.4 379.7L481.4 377.9L477.1 373.6L472.8 371.1L470.0 371.8L468.2 374.3L464.7 376.9L459.3 376.5L455.4 372.9L451.9 374.0L448.7 373.6L447.6 370.4L451.5 369.0L450.4 365.4L448.7 363.6L445.1 361.4L439.1 359.8L435.2 357.9L433.4 357.0L430.2 358.6L428.4 354.3L432.0 352.9L434.1 352.5L429.8 351.8L427.3 351.5L423.8 349.0ZM485.6 363.9L489.6 363.6L493.1 363.6L496.7 361.4L499.2 358.8L499.9 361.4L496.7 363.9L493.1 366.4L488.5 366.1ZM493.8 353.2L497.4 355.0L500.6 357.9L502.4 360.7L500.9 360.4L498.4 357.5L495.6 355.4ZM507.7 363.2L510.5 365.0L512.5 368.2L510.2 368.2L508.0 365.4ZM514.4 367.5L518.4 370.0L521.9 371.1L526.2 374.0L525.1 374.3L517.6 370.7ZM525.5 377.2L528.3 377.6L529.7 379.0L526.5 379.0ZM529.0 373.6L531.2 376.9L531.9 378.3L529.7 376.1ZM531.5 380.5L535.1 382.3L533.6 382.6ZM541.1 417.0L546.1 420.8L551.8 425.4L549.6 425.4L544.0 421.9ZM550.4 398.0L552.5 399.8L552.1 400.5L550.7 399.8ZM552.5 401.6L554.6 403.5L553.2 403.5ZM588.4 407.2L592.0 406.8L593.4 409.1L590.2 410.0L588.4 409.1ZM593.0 404.2L597.6 402.4L596.2 404.6ZM464.7 382.3L467.9 389.9L469.3 395.7L472.1 396.1L474.6 398.0L475.0 401.6L476.8 405.4L477.5 409.1L478.2 412.5L480.0 413.8L483.2 415.8L486.0 417.0L488.5 420.8L490.3 425.8L493.8 426.5L494.2 430.0L498.1 432.7L499.9 435.1L502.0 437.0L502.7 439.8L502.7 445.4L503.8 448.6L504.1 450.2L502.0 457.1L501.6 461.7L500.2 465.9L497.7 468.0L496.0 472.3L494.2 477.0L491.3 483.1L491.0 486.2L491.3 488.0L484.2 489.8L480.7 492.5L478.5 495.3L475.3 493.0L473.2 490.3L468.2 493.9L461.5 492.1L457.9 490.3L455.1 485.8L454.0 481.4L452.9 480.0L450.4 479.6L450.4 476.6L448.7 473.5L447.6 477.4L445.1 477.9L446.9 472.7L448.3 469.3L448.0 466.3L447.2 468.4L444.8 471.4L441.6 474.8L441.2 476.6L438.7 474.8L436.9 469.3L435.2 467.6L433.4 464.6L427.3 464.2L424.5 462.1L416.7 462.9L409.6 465.0L404.2 466.7L398.9 468.4L398.5 471.0L391.4 472.3L384.7 472.3L382.9 474.4L377.2 477.0L372.9 477.0L367.2 474.4L366.9 471.0L369.0 469.7L369.6 464.2L367.6 458.0L365.5 451.0L363.9 446.6L361.9 442.2L360.3 440.4L363.0 439.4L362.1 435.5L361.2 431.9L362.6 428.1L363.9 423.5L364.4 426.1L367.2 422.9L372.9 418.9L379.7 417.7L384.7 416.2L388.2 415.1L390.0 412.8L392.5 409.1L392.5 405.4L395.0 403.1L397.5 406.5L397.5 403.5L400.3 403.1L400.7 399.8L403.2 396.5L406.0 394.3L409.2 393.4L412.4 396.1L413.5 398.0L414.2 397.6L416.7 397.6L418.8 397.6L419.5 395.4L420.2 392.5L421.3 390.3L423.2 388.6L425.6 387.7L429.5 387.3L427.3 384.4L430.5 384.8L432.7 386.3L435.2 387.2L439.8 387.7L444.4 387.7L444.8 390.6L441.6 392.5L441.2 395.0L439.4 397.6L442.3 400.2L446.9 402.4L450.4 404.6L453.3 406.8L454.4 407.6L458.6 407.2L460.8 401.6L461.8 398.0L461.1 393.9L462.5 389.2L462.2 386.6L463.2 383.4ZM472.5 502.7L478.5 505.0L485.3 503.6L485.3 508.8L484.2 514.6L480.7 516.6L477.1 516.1L474.6 512.2L474.3 509.8L472.5 505.0ZM572.0 474.4L573.5 477.0L577.7 478.3L579.5 483.1L579.5 485.1L581.6 483.6L583.4 485.8L584.5 488.5L588.0 490.3L592.8 488.9L590.9 493.4L590.5 495.7L587.0 497.1L587.7 497.8L585.9 501.7L583.8 505.0L581.3 506.9L579.5 505.5L580.6 502.7L580.2 499.2L577.4 497.6L575.8 496.2L577.0 495.0L578.8 493.0L579.5 490.3L579.2 487.1L578.4 485.8L577.4 483.1L574.5 479.2L573.5 477.4L572.0 474.8ZM572.0 501.7L573.1 502.0L572.8 503.2L574.2 505.5L577.7 504.1L577.7 507.4L575.6 510.8L573.1 514.2L572.4 516.1L573.5 517.6L569.6 518.6L567.1 520.6L566.0 524.1L564.9 528.1L561.7 531.2L556.4 531.7L553.6 529.7L550.4 529.4L550.0 527.1L553.6 522.0L554.6 521.5L557.5 518.6L558.9 517.8L562.4 514.6L565.8 512.2L566.7 511.0L568.1 507.6L569.9 505.3L570.3 503.2ZM2.1 198.6L5.3 196.8L13.5 196.4L11.7 203.5L8.5 201.8L6.0 200.9L2.4 199.5ZM41.6 208.8L45.1 209.3L51.5 209.7L51.2 211.0L45.8 211.2L41.6 209.9ZM72.8 210.8L75.3 209.5L81.0 208.0L78.9 211.0L75.3 212.7L73.2 212.1ZM22.4 94.2L24.5 89.9L25.9 90.2L24.8 94.2L23.1 96.8ZM35.5 87.5L38.0 85.1L40.8 85.5L39.8 87.5L36.9 89.9ZM147.5 299.0L150.0 298.5L151.8 299.0L149.3 299.9ZM683.2 272.3L683.9 270.4L686.2 271.6L687.6 273.3L684.6 275.5L683.7 274.8ZM680.8 267.8L682.6 267.8L683.3 268.9L681.7 269.2ZM675.3 265.5L676.4 264.9L677.5 266.5L675.9 266.5ZM670.0 263.4L671.4 262.9L671.4 264.2L670.2 264.1ZM681.6 -23.5L669.1 -14.8L658.4 -7.5L647.1 1.6L644.9 7.0L651.3 10.3L656.0 18.7L659.5 20.1L663.8 24.1L665.6 25.9L659.5 27.7L655.6 27.7L656.3 23.7L647.4 26.3L640.3 32.0L646.0 34.6L646.7 39.6L649.9 41.3L656.7 40.9L658.4 41.3L662.4 42.1L665.0 37.9L664.8 42.5L666.3 46.2L661.6 49.4L658.4 52.6L652.8 53.3L650.6 57.2L647.4 64.0L649.2 67.8L650.3 71.4L652.4 73.6L654.9 76.1L660.9 75.0L662.4 77.5L663.4 82.0L661.5 85.1L667.7 83.1L673.0 86.8L674.4 82.7L678.0 84.4L679.4 84.8L678.0 88.2L677.6 92.5L674.1 96.5L667.3 102.6L659.5 107.0L657.0 109.5L651.7 111.3L657.4 110.7L662.0 108.6L667.3 106.4L670.9 103.9L674.8 101.0L679.8 97.4L683.3 93.5L686.9 90.2L689.4 87.5L693.1 83.8L690.1 80.6L692.6 77.8L695.4 74.3L697.6 70.7L700.4 68.1L705.0 67.0L702.9 69.2L700.0 71.8L699.3 78.2L697.7 81.3L702.9 79.6L706.4 76.8L710.7 75.7L711.4 70.0L716.8 68.1L720.0 72.1L724.6 75.7L735.2 76.1L740.9 79.2L747.3 83.8L752.3 88.2L755.5 96.1L759.1 101.3L763.0 107.6L766.2 110.7L774.4 113.2L777.2 119.2L780.8 125.1L783.2 130.8L785.7 133.1L791.4 136.4L794.3 138.7L795.3 138.9L797.8 141.1L800.1 141.9L801.4 143.6L802.4 144.9L802.8 147.9L803.0 151.1L801.7 153.7L801.6 148.4L799.2 148.1L794.6 146.8L795.0 149.5L796.8 154.5L797.1 158.1L797.3 163.4L796.9 166.5L796.0 172.4L795.2 175.1L796.4 180.4L795.7 186.5L797.8 191.4L798.2 193.4L800.7 197.7L802.4 198.6L802.6 200.0L804.2 202.4L804.6 204.0L806.0 206.6L806.7 208.2L808.3 209.5L809.0 212.7L809.7 213.4L812.4 213.6L813.8 214.2L815.6 215.3L816.7 215.3L817.0 216.4L817.7 216.4L818.8 217.0L820.6 218.7L821.1 220.9L823.2 224.4L824.5 228.0L825.7 230.5L826.3 232.5L828.4 234.6L830.2 236.4L831.2 237.8L832.3 240.2L830.9 241.0L828.8 240.8L829.5 241.6L831.6 243.6L834.1 245.2L835.5 245.0L838.0 247.4L839.1 250.2L838.7 252.9L839.4 254.1L841.6 254.9L843.7 256.4L846.0 258.2L847.2 260.3L848.1 259.7L848.8 257.8L847.6 255.9L845.6 255.3L844.4 252.5L843.3 250.2L842.1 248.2L839.8 244.6L838.7 242.8L837.1 240.6L836.6 238.4L834.3 236.4L832.3 233.7L831.2 232.9L830.4 230.7L829.6 227.8L829.8 224.6L830.9 225.1L834.3 226.7L835.9 228.8L837.3 232.5L838.4 234.1L840.0 236.8L841.9 238.6L843.7 240.6L844.8 243.0L848.5 245.4L849.4 246.8L850.3 249.8L852.6 251.4L854.2 253.5L857.6 256.3L859.5 259.2L862.0 261.7L863.6 265.5L862.7 268.6L863.8 268.9L862.2 269.9L862.9 271.8L864.3 273.1L867.0 275.0L870.0 277.8L874.6 279.1L876.9 280.2L882.8 283.2L887.6 285.2L892.9 286.9L894.9 287.7L896.3 287.3L899.5 285.8L902.0 285.6L904.1 286.5L906.6 288.6L909.5 291.2L911.2 292.6L915.0 294.1L918.5 295.2L920.5 295.5L923.3 296.6L925.8 296.3L927.2 296.1L926.2 297.7L928.0 299.2L930.4 301.2L932.6 303.7L932.4 305.0L932.9 306.8L932.8 307.0L933.5 308.6L935.4 309.9L936.3 308.4L937.0 309.7L938.8 310.4L940.4 311.7L940.2 313.8L941.8 314.0L942.4 313.3L943.2 315.4L945.0 314.6L947.5 315.1L949.3 316.9L950.4 318.3L952.1 318.2L953.6 317.3L952.1 315.5L951.8 314.7L953.6 314.0L955.3 312.0L956.9 312.0L958.9 313.3L959.6 314.4L959.2 315.3L960.1 317.3L962.4 316.9L963.0 313.1L958.9 310.1L957.1 309.7L954.8 309.9L953.9 310.6L951.8 311.5L949.3 312.6L947.2 311.9L945.6 310.4L944.3 309.7L942.7 308.3L941.1 306.5L940.4 304.8L940.6 302.5L940.2 301.0L940.9 298.1L941.5 293.5L942.4 290.0L940.0 288.9L938.3 286.9L935.8 286.4L932.2 286.5L929.4 287.1L927.1 287.1L925.3 286.9L924.0 287.5L923.0 287.4L922.4 287.0L922.3 286.0L923.9 284.5L924.4 282.8L924.4 280.8L923.7 277.4L925.6 278.2L926.7 274.0L927.1 270.6L928.5 268.9L929.6 267.0L928.5 265.3L924.6 265.3L919.2 266.5L916.6 268.2L916.0 272.0L915.4 273.9L913.7 275.4L911.6 276.5L908.6 276.7L906.6 277.2L903.8 278.2L902.4 278.4L900.9 277.0L899.9 276.3L897.6 275.9L896.3 274.4L895.2 272.2L894.0 270.6L892.0 267.8L891.7 265.7L890.3 262.8L890.4 256.8L891.0 253.3L892.6 248.4L892.0 245.0L892.8 241.4L894.5 239.4L897.0 237.8L899.2 236.4L901.1 235.0L904.3 233.3L906.3 233.0L908.8 233.7L910.7 233.7L911.6 234.1L913.4 234.3L914.8 235.8L917.3 235.8L918.4 235.2L920.1 236.4L921.4 235.8L920.5 234.1L919.8 232.3L919.1 231.5L921.2 230.6L923.2 230.7L925.1 231.2L925.3 229.4L926.2 231.1L928.0 230.7L930.4 230.5L933.3 231.7L934.5 233.4L935.8 233.3L937.9 232.3L939.3 231.8L940.4 232.7L941.5 233.5L942.7 235.7L943.8 237.4L944.1 238.6L943.5 240.4L943.8 241.6L944.5 243.0L944.8 243.8L945.6 245.4L946.1 246.4L947.2 247.6L947.5 248.8L948.9 249.8L949.6 251.6L950.4 251.6L952.0 251.4L952.5 250.6L953.1 249.1L953.2 247.8L953.4 245.4L953.3 244.4L952.5 242.4L952.2 241.6L951.6 239.8L951.7 238.4L950.7 237.0L950.0 235.4L949.0 232.5L948.6 230.7L948.6 227.3L950.4 223.8L951.1 223.0L952.1 221.7L953.9 220.6L955.9 219.6L956.4 218.1L957.5 216.6L960.8 216.0L961.4 214.5L963.9 212.5L965.8 212.7L969.4 209.9L969.4 207.5L968.8 206.2L967.9 202.9L966.7 202.2L966.7 198.2L966.4 195.0L967.4 191.4L968.1 193.6L967.8 198.2L967.9 201.7L970.1 198.2L971.0 196.1L971.0 194.1L969.6 191.1L971.6 193.5L973.4 191.5L974.5 189.7L974.9 186.4L974.9 185.3L975.2 185.9L977.7 185.6L980.6 184.6L982.5 183.6L981.1 183.2L978.3 184.0L976.0 184.4L977.7 183.2L978.8 182.7L981.6 182.5L983.8 182.2L984.5 181.8L984.1 180.1L985.2 181.5L985.9 181.1L986.8 180.4L986.7 181.4L988.0 180.9L989.3 180.7L989.4 179.9L988.4 178.8L988.9 179.6L987.3 180.3L986.8 179.4L985.6 177.5L987.0 176.0L986.6 174.0L988.4 171.2L992.3 168.9L993.4 167.0L995.5 167.5L998.4 166.5L999.8 165.0L999.6 163.9L1003.2 163.2L1008.3 160.4L1007.2 162.7L1012.2 162.4L1009.0 163.9L1004.0 166.5L1002.8 170.4L1004.8 172.4L1008.0 169.4L1012.0 166.5L1017.6 164.4L1021.1 162.7L1024.8 159.9L1024.1 158.1L1023.2 153.9L1021.1 156.0L1019.3 159.4L1019.5 161.2L1017.9 160.9L1015.1 160.9L1011.5 160.0L1011.2 158.7L1008.5 158.1L1007.4 155.8L1006.5 153.7L1008.7 148.9L1006.9 150.0L1004.6 150.8L1000.8 148.9L1005.1 148.7L1009.7 146.3L1009.9 144.8L1009.0 143.6L1004.4 142.2L1001.6 142.8L998.0 144.4L994.4 146.5L990.7 149.7L987.2 154.2L984.8 155.3L987.3 151.9L990.2 148.1L992.3 144.9L995.7 142.5L998.4 141.9L1000.1 138.1L1001.9 137.0L1010.4 136.4L1011.9 136.7L1018.3 137.1L1020.2 137.1L1022.2 137.0L1026.4 135.3L1027.2 134.2L1029.5 131.4L1034.8 130.1L1037.5 128.4L1040.5 125.2L1039.6 121.0L1035.3 116.8L1034.3 115.0L1032.5 113.8L1028.6 115.0L1024.3 118.0L1027.5 113.8L1031.8 111.3L1027.5 108.2L1024.0 106.1L1021.3 103.2L1018.6 99.1L1017.9 92.9L1015.4 88.2L1014.4 85.8L1011.5 82.4L1010.1 75.7L1009.0 72.8L1007.4 73.2L1005.8 77.8L1004.8 82.0L1003.5 84.4L1000.5 86.1L998.0 87.8L995.5 85.8L991.2 84.1L990.5 80.6L989.3 75.7L990.5 68.1L987.3 67.8L982.2 64.0L979.5 59.9L973.1 59.9L969.0 59.5L964.2 57.6L961.0 57.8L960.1 70.0L963.2 75.4L962.1 80.6L960.3 86.5L962.4 90.9L964.6 94.8L965.8 99.1L965.3 102.6L961.6 107.0L954.4 111.0L957.1 116.2L957.8 121.0L958.9 125.4L957.5 130.0L954.3 131.7L952.0 130.5L948.6 125.1L945.7 121.3L945.7 113.8L945.4 107.9L935.4 107.0L926.5 102.6L921.9 97.1L914.4 94.5L909.1 95.8L908.0 90.9L906.6 84.4L903.1 84.2L901.3 80.6L900.9 75.7L903.6 67.8L908.8 59.5L910.5 54.9L915.5 50.6L918.0 47.8L921.9 45.8L925.1 43.7L928.7 37.1L927.6 34.6L919.8 31.1L926.9 30.7L929.0 29.4L931.3 24.1L935.8 25.9L939.3 25.9L944.3 23.2L947.9 18.2L948.6 13.2L945.7 7.5L949.1 2.6L947.5 -2.4L944.7 -7.5L934.4 -7.5L933.6 3.6L931.2 12.2L930.1 18.7L926.9 15.9L924.4 8.4L925.1 1.6L920.8 -0.4L918.7 5.0L916.2 -1.4L910.9 -9.5L910.9 -31.4L898.4 -31.4L898.4 -9.5L902.0 -4.4L905.6 -3.4L902.0 1.6L900.2 5.5L897.0 17.8L895.6 10.3L891.3 5.5L887.8 12.2L882.4 11.7L875.3 12.2L868.2 10.3L861.1 7.5L857.6 7.5L854.0 10.3L855.4 20.5L851.9 15.9L850.4 12.2L846.9 10.8L839.8 12.7L832.7 12.2L828.8 11.9L825.6 7.5L820.2 1.6L811.3 -3.4L797.1 -5.4L793.6 -12.7L782.9 -14.8L779.3 -7.5L772.2 -5.4L765.1 -3.9L758.0 -0.4L752.7 1.6L743.8 -5.4L733.1 -8.5L711.8 -13.7ZM781.5 133.6L785.0 134.2L786.8 135.0L792.8 138.1L797.5 142.5L799.4 146.8L795.7 146.0L793.6 145.2L790.4 142.8L787.9 140.3L786.4 138.1L783.2 137.6ZM764.8 113.8L769.7 115.0L770.1 119.2L772.2 126.8L769.0 122.7L766.5 119.2ZM688.3 94.2L691.2 90.9L695.4 89.5L697.2 92.2L695.4 94.2L692.2 96.8L689.4 96.8ZM627.5 50.2L632.5 47.8L637.8 51.0L635.0 53.3L630.0 52.9ZM643.2 74.3L647.1 73.2L648.8 75.7L646.4 77.1L643.2 76.1ZM640.7 118.0L645.6 115.3L646.7 116.8L641.4 119.2ZM636.8 121.6L640.7 118.6L641.0 119.8L637.1 122.4ZM762.6 100.7L766.5 102.6L768.7 108.9L765.1 110.1L763.3 105.7ZM753.0 88.9L758.0 89.5L760.8 94.8L758.7 100.7L755.9 95.5ZM936.0 264.3L938.3 263.0L942.2 260.3L945.2 259.4L948.0 259.7L949.3 259.2L953.6 260.1L955.5 261.7L959.6 262.6L963.3 265.1L967.4 267.0L969.2 268.6L971.7 268.9L974.4 270.5L970.8 271.8L968.3 271.5L961.6 272.0L963.7 270.1L964.2 268.7L960.7 268.7L957.6 265.3L953.6 264.7L952.0 263.6L949.3 263.4L946.4 262.4L945.4 261.1L942.9 262.6L940.9 263.0L938.3 264.4ZM942.5 264.2L944.3 264.2L944.3 265.9L942.7 265.7ZM973.3 277.6L973.5 276.5L977.0 277.0L980.8 276.9L979.5 273.5L977.0 272.2L981.3 272.3L983.2 271.9L986.6 272.2L989.5 272.7L992.1 274.0L990.5 274.8L995.1 276.7L992.8 277.3L989.5 277.2L988.0 278.2L985.2 278.2L984.1 280.4L982.9 278.8L980.0 278.1L975.8 278.2ZM959.4 278.0L961.0 277.0L964.6 277.4L967.1 278.4L966.7 279.4L963.5 280.0L960.7 278.7ZM999.1 277.0L1004.6 277.4L1004.8 278.2L1003.7 279.0L999.1 279.1ZM1017.9 308.1L1018.8 305.7L1021.5 305.2L1021.1 307.9ZM959.6 251.8L961.0 251.8L961.7 254.9L961.0 256.8L959.6 254.5ZM957.5 246.0L961.0 245.2L961.0 246.0L957.5 246.4ZM962.4 244.6L964.0 246.2L964.2 248.2L963.2 248.2L963.2 246.2ZM1027.7 151.1L1027.3 146.3L1030.4 143.0L1031.8 140.9L1034.1 134.2L1036.0 131.4L1039.2 128.9L1040.9 128.9L1040.5 130.5L1038.9 134.2L1035.9 140.6L1040.7 138.1L1040.3 140.9L1042.3 142.2L1043.3 139.8L1047.8 142.2L1046.4 145.2L1049.3 145.2L1047.4 149.5L1047.1 150.8L1049.9 148.5L1049.0 152.1L1050.3 150.0L1050.6 151.3L1049.3 156.0L1047.4 156.2L1047.4 153.4L1045.3 155.1L1046.0 150.0L1043.5 152.1L1039.2 154.7L1039.8 153.7L1042.4 150.3L1039.6 151.7L1036.0 151.3L1033.2 151.1L1029.3 151.1ZM1008.7 138.7L1014.0 139.5L1018.6 143.0L1014.4 142.5L1009.7 140.0ZM1009.0 154.7L1012.2 156.5L1017.6 157.1L1015.8 158.9L1012.2 158.3L1010.1 156.5ZM960.7 -31.4L960.7 -11.6L969.6 -2.4L972.4 4.6L977.4 10.3L979.9 17.8L977.7 25.0L976.0 32.0L969.6 34.6L963.2 33.7L959.2 39.2L961.4 42.9L965.8 43.7L971.3 41.7L976.7 42.9L982.0 47.8L985.6 53.3L989.5 54.9L994.4 58.8L1001.6 61.8L1005.8 63.3L1006.9 61.0L1001.6 55.7L996.2 50.2L994.4 47.4L999.8 51.0L1005.1 54.9L1008.3 56.8L1009.4 51.0L1007.2 45.4L1006.2 39.6L1002.3 35.4L998.0 29.4L995.5 25.9L1004.4 27.2L1008.7 32.0L1011.9 37.1L1017.6 32.0L1018.3 26.8L1020.0 23.2L1017.6 18.7L1010.4 14.6L1005.1 9.4L999.8 3.6L996.2 0.6L998.0 -5.4L994.1 -14.8L989.1 -31.4ZM929.0 35.4L932.9 30.3L936.8 28.5L941.1 29.4L945.7 35.4L949.3 41.3L952.8 47.0L948.9 49.4L944.7 47.8L942.2 44.1L939.3 48.6L934.7 52.6L928.7 48.2L928.0 40.4ZM942.9 54.1L946.4 53.7L950.0 56.4L947.9 59.5L944.0 59.5L942.2 57.2ZM952.5 58.0L956.0 58.8L955.0 64.0L952.5 62.5ZM962.4 12.2L966.7 7.5L970.3 11.3L969.2 16.9L964.2 17.8ZM945.4 120.4L948.9 119.8L951.8 122.1L948.2 122.7ZM952.8 98.7L956.0 98.1L956.8 102.6L953.9 103.2ZM877.1 -31.4L877.1 0.6L871.8 2.6L864.7 -0.4L859.3 -1.4L854.0 3.6L843.3 5.0L835.5 5.5L829.1 0.6L822.0 -4.4L822.0 -31.4ZM884.2 -1.4L889.6 3.6L896.7 5.5L898.4 0.6L894.9 -8.5L887.8 -8.5ZM1047.8 -31.4L1046.7 -5.4L1056.7 -4.4L1057.4 0.6L1056.3 3.1L1049.9 3.6L1047.8 8.4L1047.4 15.0L1047.1 20.1L1047.8 26.8L1049.9 33.7L1052.4 38.8L1054.0 43.9L1056.7 50.2L1059.2 55.7L1061.3 61.0L1064.8 66.3L1069.1 69.6L1074.3 70.7L1077.1 74.6L1081.9 77.1L1084.8 75.0L1086.5 68.5L1088.3 61.0L1091.5 53.3L1094.0 45.4L1096.5 37.1L1104.3 32.0L1110.0 29.4L1115.3 25.0L1120.7 16.9L1124.2 9.4L1131.3 8.4L1138.4 5.5L1145.6 0.6L1150.9 -5.4L1159.8 -11.6L1159.8 -31.4ZM1150.9 32.9L1158.0 24.6L1165.1 27.7L1173.3 27.2L1180.4 24.1L1186.1 28.5L1189.6 36.3L1185.0 42.9L1174.0 49.8L1165.8 49.0L1157.3 46.8L1160.0 44.1L1152.7 38.4L1159.8 36.7L1158.0 33.3ZM953.9 310.6L958.9 310.1L963.0 313.1L964.6 315.6L965.1 315.1L966.4 312.4L969.2 310.1L969.6 306.8L972.0 304.3L974.2 303.6L978.8 302.7L983.2 299.4L985.2 300.3L984.5 301.7L982.2 302.5L983.4 304.8L985.6 304.3L988.4 303.2L988.2 302.3L988.0 300.7L989.1 300.3L989.8 302.1L990.4 303.0L993.4 303.4L995.2 305.0L996.2 306.5L1000.0 306.1L1003.2 306.1L1004.0 307.5L1008.0 307.7L1009.7 306.6L1009.4 305.9L1013.1 305.8L1017.9 305.7L1016.5 306.2L1015.1 307.5L1016.7 308.4L1021.1 309.7L1021.8 311.9L1022.5 313.3L1024.7 313.7L1025.4 314.4L1027.9 315.8L1029.6 318.0L1031.2 319.8L1033.6 321.7L1035.3 322.8L1041.7 322.8L1046.4 323.5L1050.8 325.7L1052.0 326.4L1055.6 328.3L1056.3 330.1L1057.0 335.1L1060.4 338.0L1058.4 341.9L1056.3 344.0L1054.5 346.5L1057.4 344.7L1062.0 344.4L1065.9 345.1L1065.2 347.6L1063.1 350.0L1065.6 349.0L1067.3 346.5L1069.6 346.1L1072.3 347.2L1076.2 348.6L1078.7 350.0L1080.1 352.5L1081.6 352.9L1083.7 352.2L1085.8 353.1L1089.6 354.3L1095.4 354.1L1101.1 357.2L1106.1 361.6L1107.7 362.2L1112.0 362.3L1112.8 364.7L1114.3 369.3L1114.0 372.7L1111.1 378.5L1108.6 381.5L1106.3 383.2L1104.7 385.5L1101.1 390.6L1099.3 393.9L1099.2 397.2L1099.2 403.3L1098.6 408.1L1096.7 411.7L1094.7 417.7L1092.6 421.5L1092.2 424.2L1089.4 425.8L1088.7 427.9L1084.4 428.1L1080.5 428.3L1079.1 429.2L1076.6 431.2L1073.4 431.9L1070.9 433.3L1067.7 436.0L1066.1 438.0L1065.4 440.6L1065.6 446.2L1064.7 449.8L1061.3 453.2L1059.9 455.9L1057.4 460.4L1052.8 464.8L1048.1 471.6L1045.5 475.5L1042.6 476.9L1038.2 476.6L1032.3 474.7L1030.2 472.7L1030.5 475.3L1032.1 476.1L1034.8 479.0L1034.1 481.1L1036.2 482.7L1035.9 486.2L1033.4 490.3L1029.1 492.8L1020.0 494.7L1016.7 493.9L1017.2 496.2L1017.2 500.3L1016.5 502.2L1014.7 504.3L1011.2 504.8L1006.9 503.2L1006.5 506.5L1007.2 509.8L1008.7 510.0L1011.2 509.3L1011.9 511.7L1009.7 512.9L1006.7 512.5L1008.3 513.7L1006.7 515.1L1004.4 522.5L1004.9 523.2L1001.6 524.6L998.0 527.9L998.0 530.9L1000.5 533.8L1004.2 534.8L1003.7 537.7L998.0 544.4L992.7 555.5L994.8 563.5L985.6 573.0L974.9 561.2L969.6 549.9L969.2 539.1L969.2 532.7L972.8 528.1L972.0 523.6L973.8 518.6L973.8 515.6L974.2 511.2L974.9 507.9L975.6 504.1L976.0 499.4L977.0 498.7L977.6 496.2L976.7 492.5L976.1 488.5L977.2 486.7L977.9 484.7L980.4 478.5L982.0 474.4L983.3 471.0L983.3 468.6L983.7 463.8L983.1 457.1L984.5 455.5L984.8 449.6L986.2 444.0L986.9 441.2L987.3 437.4L987.7 430.6L987.3 428.3L988.4 424.6L988.6 417.4L988.0 410.9L984.3 407.8L982.0 405.4L979.5 403.9L974.0 401.1L970.8 399.2L968.1 396.8L966.4 393.9L967.1 393.2L966.4 391.0L963.7 387.2L962.1 383.7L960.0 380.1L958.5 376.5L956.9 372.9L955.2 370.4L953.7 368.4L951.1 366.4L949.5 364.8L950.5 363.8L949.6 362.2L948.8 360.7L949.0 360.3L949.8 358.6L952.0 356.6L953.6 355.7L953.9 353.6L953.9 351.8L952.7 353.6L950.0 351.8L950.9 350.6L951.0 347.4L953.4 343.8L953.2 341.2L954.8 340.6L957.8 337.6L961.0 334.9L963.9 330.1L962.8 328.0L962.3 324.4L962.8 321.9L961.7 319.0L960.1 317.3L959.2 315.3L959.6 314.4L958.9 313.3L956.9 312.0L955.3 312.0Z" fill="#f3f3f3" stroke="#e6e9ec" stroke-width=".5" stroke-linejoin="round"/>
<path d="M416.7 397.6L416.7 462.9M416.7 439.8L459.3 439.8L459.3 490.5M448.7 403.9L448.7 439.8M459.3 451.8L487.8 450.2L496.7 451.8L500.2 449.0L503.8 448.6M459.3 472.7L464.7 475.7L467.9 477.4L473.6 480.9L480.7 481.4L484.9 484.9L491.2 488.0M811.3 75.7L811.3 116.2L816.7 123.9L822.0 131.4L827.3 135.3L830.2 140.3L832.5 143.6M846.9 75.7L846.9 143.6M875.3 75.7L876.0 103.9L876.8 126.8L877.5 143.6M899.7 141.4L899.7 122.1L909.1 111.9L921.9 97.1M955.3 129.7L955.3 152.6L958.9 157.3L963.5 159.4L967.8 161.4L973.5 161.7L972.8 164.2M743.8 75.7L900.9 75.7M752.7 1.6L753.4 13.2L762.3 19.6L768.0 32.0L766.9 38.8L775.8 46.2L779.3 59.5L786.4 67.8L797.1 75.7M875.3 75.7L875.3 43.7L838.0 32.9L808.8 10.3L808.8 -4.4M1035.0 130.1L1035.0 126.8L1011.5 126.8L1010.8 122.1L1002.3 121.6L998.4 115.0L998.4 108.2L1008.3 108.2L1011.2 100.0L1009.7 85.5L1011.2 77.1L1008.7 73.6M1002.3 121.6L1006.9 126.5M992.5 152.1L992.5 148.9L998.0 148.9L1001.9 149.2M1010.3 159.4L1009.4 160.1M796.4 158.3L800.0 158.6L801.4 161.4L807.1 160.9L813.8 159.7L822.3 159.4M821.9 143.6L821.9 157.3L822.3 159.4L822.7 162.9L821.9 168.4L821.9 179.2M796.0 179.2L843.2 179.2M811.3 179.2L811.3 193.2L830.5 210.8L830.2 214.0L830.9 219.6L830.2 220.8M832.5 179.2L832.5 205.8L830.5 207.1L830.5 210.8M832.5 202.2L875.2 202.2M843.2 164.4L843.2 183.9L850.3 183.9L850.3 226.6M825.4 143.6L825.4 148.9L830.9 156.3L831.6 161.9L834.4 161.4L836.6 167.0L843.2 167.0M843.2 164.4L868.0 164.4M868.0 143.6L868.0 183.9M843.2 183.9L875.2 183.9L875.2 202.2M868.0 159.7L894.7 159.7M868.0 174.3L887.8 174.3L895.1 176.8M868.0 183.9L875.2 183.9M875.2 188.6L899.2 188.6M871.8 202.2L871.8 223.8L859.0 223.8M871.8 204.4L882.4 204.4L882.4 212.9L889.6 214.9L896.7 216.2L902.0 216.9L903.6 219.6L903.6 223.8L905.4 227.6L904.5 232.5M875.2 202.2L901.6 202.2L901.6 204.4L901.6 188.6L897.4 185.8L895.1 176.8L894.5 171.9L895.1 162.9L893.8 156.3L892.4 143.6M895.1 171.9L913.7 171.9M897.4 185.8L913.0 186.7L912.7 188.6L919.8 202.2L920.8 202.7L919.8 204.4L917.3 206.9L916.9 211.0L914.1 219.6L913.7 228.0L919.1 228.0L919.1 231.3M901.6 204.4L917.3 204.4M902.0 216.9L903.6 219.6L914.1 219.6M910.5 155.5L908.0 161.4L908.4 166.0L913.7 171.9L914.1 175.8L917.3 180.1L914.1 184.8L913.0 186.7M916.6 156.5L924.8 159.9L926.5 163.9M915.7 176.8L925.8 176.8M926.8 180.4L926.8 196.8L925.1 198.2L921.2 202.2M936.5 180.4L936.5 192.7L938.3 194.1L944.3 195.9L947.5 192.7L951.8 185.8L951.7 177.7M928.7 180.4L941.5 180.4M921.2 202.2L925.1 201.3L930.4 198.2L934.4 194.6L936.5 192.7M944.3 195.9L945.4 199.5L947.5 201.3L940.4 204.0L919.8 204.4M940.4 204.0L968.1 204.2M947.5 201.3L952.5 200.0L955.0 195.5L959.6 191.4L961.7 191.8L963.9 193.6L964.6 196.8M951.7 185.8L951.7 189.9L968.5 189.9L969.6 189.5L971.0 188.6L972.4 182.3L970.1 179.2L954.4 179.2L954.4 176.8M968.5 189.9L968.8 195.7L971.2 195.7M972.4 182.3L975.2 183.9M976.7 164.4L977.6 175.5L976.7 178.9L976.7 183.0M977.6 175.5L985.6 175.1M976.7 178.9L982.7 179.1L984.1 179.1L985.2 181.5M982.7 179.1L982.5 182.5M980.2 164.4L980.6 174.3L980.4 175.6M985.4 162.9L985.6 173.8L986.6 173.8M923.4 211.0L938.3 211.0L942.5 211.0L945.4 210.1L950.0 210.4L950.7 211.9L954.6 211.9L958.7 215.9M938.3 211.0L946.4 206.2L947.5 204.0M924.4 211.0L923.4 230.9M933.6 211.0L935.8 222.5L935.6 228.0L926.5 228.0L926.9 230.9M935.6 228.0L936.1 229.2L945.7 229.8L946.4 228.8L948.2 229.1M942.5 211.0L941.6 212.3L945.7 217.0L948.2 219.6L949.6 223.4M1024.7 402.8L1031.8 398.7L1038.9 406.5L1046.0 407.6L1049.6 409.1L1056.7 414.7L1058.4 418.5L1054.9 426.1L1049.6 428.1L1044.9 432.1M1049.6 409.1L1058.4 405.4L1059.5 390.6L1067.3 388.8L1074.4 390.6L1074.4 381.5L1067.3 379.7L1065.6 372.5L1063.1 365.4L1066.3 362.5L1074.4 361.8L1074.4 352.9M1059.5 390.6L1056.7 379.7L1053.1 377.9L1035.3 377.2L1030.0 370.7L1030.7 375.4L1019.0 376.1L1019.3 382.6L1024.7 383.4L1024.7 392.5M1035.3 377.2L1036.0 365.4L1031.8 351.8L1036.0 351.1L1037.1 337.2M1019.0 376.1L1012.2 372.5L1000.5 379.0M1012.2 372.5L1017.6 370.7L1030.0 370.7M989.1 358.9L978.4 370.0M1031.8 351.8L1024.7 343.3L1017.6 341.2L1012.6 336.5M1056.7 414.7L1069.1 411.0L1069.8 401.6L1074.4 398.0L1074.4 390.6M1069.1 411.0L1070.9 416.6L1079.8 425.4L1079.8 429.2M1070.9 416.6L1058.4 418.5M1049.6 428.1L1060.2 428.1L1062.0 434.7L1066.6 437.0M1047.2 440.8L1056.7 441.0L1065.2 439.8M1046.7 444.4L1056.7 447.0L1061.3 453.0M1074.4 390.6L1081.6 395.4L1088.7 398.0L1095.8 401.6L1098.6 408.3M1081.6 395.4L1081.6 382.6L1086.9 377.9L1094.0 377.6L1102.2 376.1L1106.4 379.7M1074.4 381.5L1078.0 372.5L1085.1 368.2L1089.4 354.7M1094.0 377.6L1092.2 370.7L1095.8 370.0L1101.1 367.2L1105.4 360.7M1095.8 370.0L1106.4 370.7L1113.6 370.7M1102.2 376.1L1108.2 376.1L1112.8 376.1M1079.8 425.4L1088.7 419.6L1092.2 421.2M1088.7 419.6L1089.4 411.0L1095.1 409.1M1089.4 411.0L1088.7 398.0M71.8 157.8L77.1 151.1L83.2 152.6L89.6 150.5L93.8 146.3L99.5 145.7M77.1 151.1L71.8 146.3L64.7 147.9L62.9 140.9L55.8 143.6L50.4 138.7L43.3 142.5L39.8 138.7M62.9 140.9L64.7 133.6L71.8 135.3L75.3 129.7M71.8 146.3L75.3 139.2L84.2 139.8L87.8 136.4M84.2 139.8L86.0 145.2L93.8 146.3M100.2 140.3L107.3 138.1L114.4 140.9L124.4 141.9M114.4 140.9L116.2 132.5L123.3 130.8L130.4 134.2M107.3 138.1L105.6 131.4L109.1 125.1L114.4 123.9L116.2 132.5M83.9 132.2L86.0 126.8L93.1 125.1L94.9 117.4L100.2 115.6L107.3 116.8L109.1 125.1M93.1 125.1L100.2 132.5L105.6 131.4M86.0 126.8L82.4 121.0L75.3 119.2L74.3 118.3M82.4 121.0L86.0 113.2L94.9 113.2L94.9 117.4M86.0 113.2L83.2 107.6L75.3 105.7L68.2 105.1M83.2 107.6L87.8 99.4L94.9 97.4L102.0 100.7L107.3 99.4L110.9 108.9L107.3 116.8M94.9 113.2L100.2 110.1L102.0 100.7M87.8 99.4L80.7 92.9L71.8 94.2L64.7 89.5L57.6 94.8M80.7 92.9L86.0 84.1L82.4 79.2L86.0 72.1L78.9 68.5M86.0 84.1L100.2 86.1L107.3 89.5L107.3 99.4M64.7 89.5L64.7 80.6L58.3 80.6M64.7 80.6L75.3 80.6L82.4 79.2M75.3 80.6L78.9 68.5L71.8 64.8L64.7 63.3M86.0 72.1L93.1 70.0L100.2 75.7L110.9 73.6L118.0 82.7L125.1 79.2L128.7 68.5L134.0 57.2L135.8 42.9L150.0 37.1L157.1 38.8L169.6 32.9L171.3 24.1L178.4 19.6L192.7 6.5M100.2 86.1L100.2 75.7M107.3 89.5L114.4 86.1L121.6 92.9L125.1 79.2M110.9 108.9L121.6 105.7L126.9 99.4L121.6 92.9M121.6 105.7L123.3 115.0L130.4 118.0L137.6 113.8L146.4 115.0L150.0 105.7L148.2 98.1L139.3 99.4L141.1 92.9L150.0 89.5L157.1 92.9L167.8 86.1L167.8 72.1L171.3 62.5L169.6 32.9M126.9 99.4L132.2 102.6L139.3 99.4M123.3 115.0L118.0 122.1L114.4 123.9M130.4 118.0L132.2 126.8L138.6 128.5M146.4 115.0L146.4 123.9L152.1 132.5M150.0 105.7L160.7 102.6L169.6 102.6L167.8 86.1M160.7 102.6L162.4 111.9L169.6 111.9L169.6 121.0L175.6 121.0M169.6 111.9L174.9 105.7L180.2 105.7L178.4 99.4L169.6 102.6M180.2 105.7L189.1 103.9L189.8 112.9M178.4 99.4L183.8 89.5L192.7 86.1L192.7 75.7L174.9 64.8L171.3 62.5M192.7 86.1L203.3 82.7L210.4 86.1L215.8 82.7L224.7 88.2L228.2 84.1L235.3 86.1L253.1 68.5L260.2 64.8L260.2 45.4L242.4 32.9L237.1 15.0M189.1 103.9L203.3 102.6L208.7 92.9L210.4 86.1M209.7 107.0L214.0 99.4L208.7 92.9M214.0 99.4L224.7 96.1L230.0 97.4L226.4 108.9L231.1 112.6M230.0 97.4L235.3 86.1M226.4 108.9L235.3 115.0L237.1 123.9L242.4 126.8L242.4 133.6M235.3 115.0L249.6 115.0L256.7 105.7L260.2 92.9L267.3 89.5L274.4 96.1L270.9 105.7L263.8 111.9L256.7 105.7M249.6 115.0L253.1 123.9L263.8 126.8L270.9 123.9L274.4 126.8L270.9 137.0L270.2 142.7M263.8 126.8L263.8 111.9M270.9 123.9L272.7 115.0L279.8 108.9L274.4 96.1M279.8 108.9L285.1 118.0L295.8 111.9L299.3 102.6L308.2 89.5L306.4 75.7L313.6 61.0L320.7 57.2L331.3 41.3L334.9 28.5L331.3 10.3L338.4 -9.5M272.7 115.0L274.4 126.8M285.1 118.0L295.8 123.9L306.4 130.0M295.8 111.9L310.0 115.0L313.2 126.8M308.2 89.5L320.7 99.4L326.0 94.8L338.4 99.4L342.0 86.1L349.1 79.2L359.8 82.7L370.4 94.8L375.8 94.2L384.7 97.4L388.2 108.9L391.8 112.6L384.7 119.2M320.7 99.4L310.0 115.0M338.4 99.4L343.8 108.9L349.1 118.0L354.4 123.9L349.1 129.7L343.8 126.8L338.4 129.7L334.9 136.4M343.8 108.9L356.2 105.7L370.4 94.8M354.4 123.9L363.3 126.8L370.4 129.7L384.7 119.2M391.8 112.6L402.4 99.4L409.6 103.9L423.8 104.5L427.3 92.9L438.0 82.7L448.7 77.1L455.8 88.2M402.4 99.4L384.7 97.4M409.6 103.9L420.2 115.0L434.4 118.0L448.7 115.6M420.2 115.0L422.0 132.5L423.8 142.5M434.4 118.0L438.0 138.1L430.9 146.3L429.1 150.5M438.0 138.1L448.7 129.7L457.6 132.5M430.9 146.3L439.8 151.6L450.4 155.8M359.8 82.7L361.6 68.5L374.0 61.0L377.6 41.3L363.3 28.5L334.9 28.5M374.0 61.0L391.8 75.7L420.2 72.1L427.3 92.9M448.7 77.1L462.9 64.8L477.1 61.0L484.2 41.3L498.4 45.4L509.1 32.9L519.8 41.3L526.9 28.5L537.6 32.9L544.7 45.4L555.3 41.3L576.7 28.5L590.9 5.5M462.9 64.8L484.2 75.7L498.4 81.3M484.2 41.3L473.6 10.3L480.7 -14.8M537.6 32.9L537.6 57.2L544.7 68.5L541.1 75.7M509.1 32.9L526.9 5.5L534.0 -4.4M142.9 180.1L146.4 178.7M300.8 175.5L302.9 183.9L295.8 188.6L294.0 193.2L278.0 195.5L276.2 204.4L267.3 205.8L253.1 209.7L242.4 208.4L238.5 214.0M278.0 195.5L281.6 206.6L290.4 215.3L302.9 217.5L310.0 215.3L320.7 219.6L322.4 232.1L310.0 236.2L308.9 242.0M302.9 217.5L308.2 228.0L310.0 236.2M320.7 219.6L327.8 215.3L334.9 221.7L343.8 223.8L349.1 225.9L349.1 236.2L345.6 244.2L333.1 244.2L329.6 238.2L322.4 232.1M327.8 215.3L324.2 206.6L317.1 202.2L315.3 193.2L306.4 186.3L302.9 183.9M324.2 206.6L331.3 200.0L338.4 198.6L342.0 190.9L336.7 188.6L333.1 181.5M338.4 198.6L342.0 206.6L350.9 211.0L354.4 197.7L352.7 190.9L342.0 190.9M350.9 211.0L350.9 219.6L343.8 223.8M352.7 190.9L363.3 188.6L365.1 179.2L356.2 171.9M363.3 188.6L363.3 197.7L361.6 206.6L370.4 205.3L368.7 195.5L375.8 194.6M361.6 206.6L356.2 211.0L352.7 218.3L361.6 221.7L366.9 213.2L370.4 205.3M370.4 205.3L377.6 211.0L382.2 211.0M366.9 213.2L374.0 213.2L377.6 221.7L381.1 228.0L388.2 228.0M361.6 221.7L370.4 228.0L372.2 234.1L377.6 236.2L377.6 221.7M372.2 234.1L363.3 234.1L361.6 244.2L363.3 252.1L370.4 252.1L377.6 242.2L377.6 236.2M377.6 242.2L385.7 243.0M370.4 252.1L374.0 257.6M363.3 252.1L356.2 252.1L349.1 250.2L345.6 244.2M356.2 252.1L354.4 261.9L349.1 265.7M345.6 244.2L343.8 252.1L334.9 252.1L332.4 258.8M334.9 252.1L333.1 244.2M349.1 236.2L356.2 232.9L363.3 234.1M352.7 218.3L349.1 225.9M365.1 179.2L370.4 179.2L381.1 176.8L384.7 169.4L391.8 159.4L388.2 151.6L384.3 156.0M381.1 176.8L384.7 183.9L383.2 189.0M384.7 169.4L395.3 171.9L402.4 161.9L398.9 154.2L391.8 159.4M395.3 171.9L402.4 183.9L400.1 188.6M402.4 161.9L413.1 164.4L420.2 169.4L424.8 172.4M413.1 164.4L409.6 154.2L398.9 154.2M409.6 154.2L420.2 144.1M388.2 151.6L388.2 138.1L402.4 129.7L404.6 120.7M222.9 221.7L228.2 228.0L231.8 230.0L233.9 236.2L228.2 240.2L224.7 234.1L217.6 235.4M231.8 230.0L238.2 227.1M233.9 236.2L235.3 244.2L238.9 246.2L242.4 237.0M228.2 240.2L221.1 248.2L222.9 254.1L217.6 256.1L210.4 254.5M222.9 254.1L228.2 254.1L235.3 244.2M221.1 259.9L222.9 263.8L219.3 269.5L216.8 270.6M221.1 259.9L235.3 258.0L238.9 246.2M222.9 263.8L231.8 265.7L244.2 265.7L244.2 277.0L235.3 278.9L233.6 286.4L222.9 287.1L222.2 290.8M244.2 265.7L249.6 258.0L254.9 254.9L256.7 261.9L249.6 271.4L244.2 277.0M254.9 254.9L256.7 252.1L267.3 250.2L271.6 249.0M256.7 252.1L254.2 242.8M256.7 261.9L267.3 263.8L269.1 265.7M267.3 263.8L265.6 254.1L270.2 252.1M249.6 271.4L258.4 275.2L260.2 274.0M244.2 277.0L247.8 280.8L254.9 277.0L258.4 275.2M235.3 278.9L231.8 286.4L233.6 291.9L237.1 296.3L243.2 295.5M233.6 286.4L242.4 286.4L243.5 288.9M233.6 291.9L230.0 299.2L232.5 304.6L232.5 314.4M224.0 297.4L230.0 299.2M237.1 296.3L232.5 304.6M277.5 251.0L286.7 252.1M285.3 244.8L288.7 244.2L296.5 245.6M288.7 244.2L294.4 251.4" fill="none" stroke="#999" stroke-width=".6" stroke-dasharray="2.4 1.8" stroke-linejoin="round"/><path d="M1.0 74.3L2.4 71.4L1.4 64.8L1.7 58.8L1.0 49.4L4.9 44.6L8.1 41.3L9.6 32.9L13.1 25.9L16.3 17.8L19.5 9.4L22.4 5.5L29.5 0.1L31.1 0.0M31.1 0.0L32.7 1.6L36.2 5.5L41.2 10.3L42.3 15.0L41.9 21.4L43.3 26.8L43.9 30.3M33.7 -2.4L37.6 3.6L40.5 4.1L46.5 5.0L49.7 0.6L50.4 -6.4M60.9 0.1L59.3 5.5L64.3 13.2L61.1 20.5L65.0 31.1L63.6 38.8L66.4 43.7L64.7 47.8L70.4 54.1L64.7 62.5L59.7 68.9L56.8 71.8M57.6 79.6L55.4 84.1L55.8 90.2L55.2 92.5L50.4 90.9L48.0 89.5L44.6 90.4M55.2 92.5L56.8 94.2L58.3 101.6L54.0 103.9L52.6 104.7L46.9 101.3L43.3 100.7L38.0 100.0L32.8 102.1M52.6 104.7L52.2 107.0L49.7 109.5L49.4 113.2L44.8 115.6L41.6 115.3L39.1 112.8L38.4 109.2L36.6 108.6L33.7 107.3M39.1 112.8L34.1 113.0L28.4 112.4M41.6 115.3L43.0 122.7L40.5 125.6L42.1 129.7L43.7 133.4L41.6 136.4L38.7 140.3L38.4 143.0L34.4 141.4L29.8 141.7L27.3 140.6L25.0 140.9L20.9 136.4L18.1 135.6L16.0 134.5L11.3 132.5L10.6 133.2L11.2 129.7L9.9 126.2L9.9 123.3L8.3 121.8L9.2 119.2L8.5 115.6M10.6 133.2L8.8 132.2L4.9 135.0L1.7 136.7L2.4 138.7L5.6 143.6L7.1 144.9L4.2 147.6L3.3 150.5L4.4 151.6L1.4 151.1M7.1 144.9L10.6 144.1L12.4 143.6L15.2 144.9L18.3 145.7L19.2 144.4L22.4 143.0L25.0 140.9M18.3 145.7L18.8 148.4L19.0 148.9L16.7 150.5L16.5 154.2L15.2 155.0L11.3 156.3L6.7 156.8L2.1 155.8L1.2 154.2M19.0 148.9L24.8 150.0L28.8 148.1L34.1 146.0L36.8 146.8L38.2 143.1M36.8 146.8L39.4 148.9L36.2 152.1L33.4 157.3L30.0 158.8L27.7 158.5L25.2 159.8L20.6 159.6L17.9 157.6L16.8 156.8L15.2 155.0M16.8 156.8L13.6 158.2L12.4 162.2L9.9 161.3L6.4 162.1M6.7 156.8L6.4 158.6L6.4 161.4M12.4 162.2L14.2 163.4L16.0 164.4L18.4 163.4L22.0 163.9L25.6 165.2L25.7 161.9L25.2 159.8M14.2 163.4L14.0 165.5L15.6 168.4L18.4 171.9L20.8 174.1L23.6 176.5M25.6 165.2L26.8 167.9L27.3 170.7L26.3 171.9L24.5 173.4L23.6 176.5M26.3 171.9L29.1 173.8L30.4 175.1L29.3 176.5L27.7 176.5L26.9 179.9M29.3 176.5L30.9 178.2L31.2 179.9L30.9 182.5L31.8 184.4L32.7 184.6L31.6 187.2L30.2 189.5L29.1 190.0M30.0 158.8L33.7 163.4L34.4 165.5L36.6 167.0L37.8 166.0L38.5 168.4L37.6 171.4L39.8 173.6L37.6 177.7L39.8 180.4L39.6 182.3M31.2 179.2L34.4 178.0L37.6 177.7M32.7 184.6L35.5 184.1L39.6 182.3L44.4 181.5L48.0 182.7L50.8 182.3L51.7 180.6L52.6 182.3L50.6 185.1M51.7 180.6L54.7 178.7L57.6 179.3M38.5 168.4L39.8 170.4L45.1 170.7L49.0 171.2L54.0 168.9L59.5 170.7M39.4 148.9L43.3 149.2L46.5 150.3L51.2 147.9L52.6 147.6L55.8 151.6L57.9 154.7L58.4 161.9L63.4 162.9M52.6 147.6L56.8 146.5L61.5 149.2L64.1 156.8L65.0 157.3L60.9 159.4L58.4 161.9M42.1 129.7L46.9 127.4L54.7 129.1L61.8 130.2L66.6 130.8L68.0 126.5L71.1 126.2L76.8 124.8L80.3 128.2L83.9 132.2L84.6 136.2L91.3 135.9L93.8 138.4L100.8 140.3L99.5 144.4L99.9 147.3L99.5 149.7L96.1 149.7L94.0 153.7M58.3 101.6L62.5 104.2L67.9 105.1L67.5 110.1L71.1 115.0L74.3 118.3L69.6 119.8L71.1 126.2M105.7 181.4L109.1 181.8L112.5 183.4L113.6 185.3L113.2 188.1L117.3 190.0L115.9 191.4L114.6 193.2L115.5 195.9L115.2 198.2L116.6 200.2L117.3 201.5L114.8 200.9L110.9 200.7L108.6 201.8L104.5 201.8L100.2 203.1L96.7 203.5L93.1 202.9L89.9 203.8L88.3 203.1L88.1 205.8L86.5 207.3L85.7 207.0M100.2 172.4L105.2 172.6L109.1 173.4L113.7 176.0L117.6 175.5L120.5 176.8L123.2 179.6L122.6 181.1L123.7 183.4L118.0 182.5L112.5 183.4M118.0 182.5L120.1 184.8L121.2 187.7L123.3 190.7L123.5 193.8L125.1 192.3L128.7 190.0L129.9 191.4L128.7 194.1L131.9 195.7M123.2 179.6L126.2 182.0L128.3 183.0L130.8 179.9M117.3 190.0L119.8 193.2L123.5 193.8M117.3 201.5L119.4 206.6L121.9 208.0L120.1 212.7L121.6 218.3L126.5 222.1L128.1 224.6L127.6 228.0L130.6 232.3M149.6 200.7L155.0 197.3L161.4 196.6L165.6 199.3L169.0 200.0L175.6 204.0L175.2 209.7L173.3 214.5L173.1 216.8L174.4 223.0L177.6 226.3L177.4 228.6L174.4 232.7L177.0 236.6L181.3 239.2L181.1 243.2L183.1 245.6L178.1 247.2L177.0 251.4M108.6 201.8L104.8 204.9L103.8 213.6L96.0 218.0L97.4 223.2L101.6 224.0L107.7 227.6L116.9 235.4L123.5 235.8L126.7 232.1L128.5 232.1M123.5 235.8L126.7 236.3L127.6 238.1L130.2 238.0M96.0 218.0L89.0 222.5L85.1 220.9M85.8 212.5L88.1 214.5L86.0 217.5L84.8 218.5L82.8 219.2M84.8 218.5L84.4 222.1L84.4 224.8L83.9 227.6L82.4 233.9M79.8 227.1L82.1 234.1M97.4 223.2L89.6 225.9L93.1 230.0L91.3 232.1L88.7 232.7L86.4 235.4L82.3 234.7M110.2 284.9L111.6 281.2L115.2 281.2L123.0 281.7L125.1 282.8L129.4 278.4L132.6 276.7L142.9 275.2L153.6 271.4L155.9 263.8L154.3 261.1L144.8 260.1L141.5 255.7L141.4 255.1M154.3 261.1L156.2 255.3L157.5 253.1L158.5 252.2M142.9 275.2L146.8 283.9M138.6 253.1L140.0 253.7M47.4 225.7L46.4 230.0L46.9 235.2L46.9 263.8L89.2 263.8M46.9 263.8L46.9 271.4L43.3 271.4L43.3 273.3L14.9 258.2L8.5 261.5L0.6 258.0L-0.9 254.1L-5.4 254.5M-5.4 225.1L-1.1 221.3L-0.9 218.9M43.3 273.3L43.3 287.5L39.6 288.0L37.6 293.7L36.6 297.4L35.7 298.8L38.0 302.5L39.4 304.6L35.2 306.5L30.5 311.5L25.6 311.9L24.1 315.1L20.6 315.6L16.3 316.5L13.1 317.1M14.9 258.2L11.3 266.5L14.0 271.8L13.1 283.0L9.2 287.5L5.9 292.0L6.5 294.7L8.1 297.1L9.9 298.5L11.5 301.0L11.7 305.4L13.6 308.4L8.5 308.3L7.7 309.6L11.0 312.6L12.9 316.4L13.1 317.1L9.6 321.9L9.9 325.1L11.3 328.3L14.5 333.0L15.6 336.2L15.2 338.0L9.6 336.4L5.3 336.3L-1.6 335.8M6.5 294.7L2.4 297.0L-4.0 295.9M8.1 297.1L7.1 304.6L3.9 310.4L1.6 314.0L-0.2 318.3L-4.7 319.4M5.3 336.3L4.9 339.6L8.5 339.0L9.6 341.2L7.4 343.3L9.4 345.8L9.2 350.8L7.8 352.9L3.5 351.1L2.4 352.5L-0.8 352.4L0.3 355.7L-2.4 358.1M15.6 336.2L17.0 331.5L24.1 331.5L24.0 328.7L27.0 325.8L31.2 328.3L37.6 329.4L39.4 326.9L44.8 325.8L48.0 326.2L55.4 326.0M24.1 331.5L22.4 335.8L21.3 342.9L17.7 348.3L15.6 351.8L14.5 357.9L12.0 359.3L9.2 361.3L4.6 360.6L2.8 361.6L1.4 364.5M1.7 365.4L5.6 364.8L17.0 365.0L18.1 369.7L27.0 372.5L27.0 369.0L35.5 370.0L35.9 374.0L35.5 377.9L37.3 383.4L43.2 382.9L43.5 388.4L43.3 390.6L36.2 390.6L36.2 402.4L41.2 407.6L47.8 408.3M-0.2 406.3L4.2 405.4L7.8 406.8L23.4 406.8L34.1 409.1L41.2 407.6M34.1 409.1L32.7 410.2L32.7 424.2L29.1 424.2L29.1 434.9L29.1 449.4L25.6 451.6L19.9 450.6L16.5 450.2M32.7 410.2L40.8 409.1L44.8 408.9L47.8 408.3M29.1 434.9L30.4 437.4L32.1 443.2L35.2 443.2L38.4 440.2L39.8 437.0L44.8 438.8L48.7 438.4L50.1 434.9L53.5 432.9L54.0 430.6L58.6 426.5L62.4 424.9L69.3 425.8M62.4 424.9L57.6 422.5L56.5 418.5L51.2 414.9L47.8 408.3L54.0 408.9L60.8 401.5L66.2 400.3L65.4 397.8L76.0 394.3M69.3 425.8L73.2 421.5L75.3 415.8L74.3 412.5L75.5 406.7L75.2 404.2L68.2 401.6L66.2 400.3M76.0 394.3L74.3 392.8L75.3 389.2L76.4 385.5L76.2 383.0L75.2 377.6L68.2 374.7L67.3 373.3L60.8 374.3L59.0 377.2L59.9 382.3L59.0 386.6L61.1 388.4L64.0 387.5L64.0 392.3L60.8 392.1L57.6 388.4L54.7 385.5L48.0 384.1L44.8 385.0L44.4 383.5L43.2 382.9M76.0 394.3L77.5 396.3L80.3 395.7L80.3 401.3L83.2 405.7L83.5 402.8L85.5 401.6L85.3 396.5L81.7 392.8L82.3 385.4L87.8 385.9L92.8 384.4L97.7 383.9L101.8 381.5M82.3 385.4L80.7 379.4L78.5 377.9L75.2 377.6M69.3 425.8L70.2 430.0L71.8 433.9L71.6 439.6L72.1 443.2L75.0 443.2M71.6 439.6L68.2 439.8L67.5 443.0L69.3 445.0L71.8 443.2M54.0 454.5L57.6 451.4L59.9 450.2L62.5 453.4L61.6 455.5L58.3 458.6L55.4 457.1L54.0 454.5M78.5 347.6L91.7 354.7L92.2 356.8L97.4 360.6M78.5 347.6L78.7 343.3L80.8 340.1L82.4 337.2L80.3 330.8L78.8 329.0L83.5 327.6L85.8 327.4L89.2 328.2L93.5 331.2L98.6 331.9L103.1 328.9L107.0 329.8L103.7 334.0L103.8 347.0L105.7 349.9M107.0 329.8L110.9 327.6L117.8 326.6L128.7 315.5L125.1 315.5L114.4 311.9L110.9 306.5L110.5 304.8L106.6 304.6L106.4 302.8L108.8 299.4L111.4 298.5M108.8 299.4L104.5 295.2L100.2 292.1L96.7 291.5L92.8 290.6L88.0 292.7L87.6 289.5L89.6 282.5L95.2 278.9M88.0 292.7L86.5 298.5L82.8 301.7L82.3 305.2L80.0 306.5L79.2 310.2L79.2 313.3L75.3 315.8L78.7 318.3L82.4 323.0L85.6 325.1L85.8 327.4M79.2 310.2L76.0 305.7L75.7 300.3L74.3 300.3L72.8 302.1L71.4 306.5L68.2 309.2L61.1 309.7L57.6 310.6L52.2 310.1L46.2 312.6L41.6 312.9L42.1 308.6L39.4 304.6M41.6 312.9L44.0 314.4L47.6 317.6L51.9 320.5L55.4 326.0L59.0 328.7L62.9 327.6L67.7 331.5L71.4 330.8L74.3 330.7L78.8 329.0M67.7 331.5L67.3 335.5L69.3 336.4L66.4 339.7L64.5 341.2L63.2 347.2L63.2 349.0L66.4 347.7L78.5 347.6M63.2 349.0L61.1 353.6L62.0 359.8M66.4 347.7L67.7 352.2L66.4 354.5L67.5 355.7L64.7 359.3L62.5 359.8M61.1 353.6L64.3 353.6L66.4 352.5M132.9 157.8L130.4 155.8L125.1 149.5L123.3 146.8L125.5 142.5L124.4 141.9L126.9 135.9L131.2 138.7L131.5 134.8L138.6 128.5L144.7 129.7L148.2 130.2L152.1 132.5L156.0 134.8L162.1 131.9L166.4 132.5L169.6 135.0L176.3 133.6L177.0 130.2L171.3 127.4L174.9 125.1L173.8 122.1L175.6 121.0L177.0 118.0L174.9 115.3L182.0 113.8L189.8 112.9L200.5 108.9L209.7 107.0L211.2 113.8L219.3 115.0L219.0 118.0L222.9 117.4L230.0 113.8L231.1 112.6L235.0 119.2L242.4 133.6L247.4 133.1L254.5 132.5L260.9 140.3L266.6 139.2L268.6 143.0L270.2 142.7M268.6 143.0L263.1 146.8L262.0 153.9L253.1 153.2L250.6 161.7L242.4 164.4L245.3 173.6L243.3 178.2L243.2 178.9L238.9 175.3L227.5 174.6L221.8 173.4L219.3 177.0L213.3 175.3L210.3 178.0L206.9 182.0L203.5 182.0L199.8 183.9L195.2 183.2L192.7 177.2L193.0 174.3L189.1 170.9L175.2 167.9L166.4 161.7L157.1 164.4L157.1 182.5L155.2 182.7L152.7 178.9L146.4 178.7L144.5 180.4M157.1 182.5L161.0 182.3L166.4 175.8L171.3 178.2L171.7 182.0L178.1 183.4L182.0 191.4L186.3 193.4L194.4 200.7L199.1 201.3L204.4 201.8L207.6 199.5L209.0 196.1L211.9 198.2L212.6 203.5L216.5 202.2L220.4 200.4L224.3 201.1L225.4 195.5L220.4 195.0L219.9 191.1L221.1 188.1L228.2 186.7L236.8 182.0L243.2 178.9M199.1 201.3L199.8 193.6L200.1 190.7L208.7 188.6L209.0 187.7L214.7 186.5L217.9 184.6L213.3 182.5L210.3 178.0M209.0 187.7L206.9 190.7L214.0 191.6L219.9 191.1M175.6 204.0L175.6 208.2L180.9 209.7L187.3 205.3L191.2 200.9L194.4 200.7M174.4 232.7L180.2 234.6L185.9 234.8L193.7 232.7L194.1 228.2L199.8 225.1L204.4 224.0L205.1 219.6L208.0 218.1L206.5 215.3L210.8 213.8L212.6 209.7L211.3 206.2L215.8 203.1L221.5 202.9L224.3 201.1L227.9 203.8L231.1 208.2L234.6 208.8M200.5 257.2L202.4 254.9L210.6 254.5L209.0 249.4L207.2 246.0L205.1 244.2L208.3 240.2L213.6 240.4L217.6 235.4L220.8 230.5L223.2 227.6L222.9 221.7L225.9 222.5M234.6 208.8L236.8 212.7L238.9 214.0L238.7 217.9L240.7 220.6L238.0 221.3L236.9 221.7L238.0 226.7L246.0 231.3L249.9 230.7L256.3 235.0L260.8 237.8L263.8 240.6L271.2 240.6L273.7 240.0L274.1 243.0L276.6 239.6L279.4 240.0L283.9 241.2L287.2 240.8L290.8 237.6L295.8 235.6L300.0 234.8L304.1 239.2M246.0 231.3L242.6 237.0L247.1 239.6L254.2 242.8L259.0 244.0L263.1 245.8L271.2 246.6L271.2 240.6M274.1 243.0L274.4 244.8L278.0 245.2L285.3 244.8L283.9 241.2M304.1 239.2L302.9 243.8L296.5 245.6L294.4 251.4L294.7 256.1L289.9 255.9L289.9 259.9L287.2 263.8L286.2 257.2L282.3 257.2L283.0 255.7L285.5 254.5L286.7 252.1L277.5 251.0L277.3 247.4L272.3 245.8L271.2 249.0L274.1 251.4L273.6 254.9L271.4 254.1L273.6 258.8L274.6 263.4L274.6 264.2M287.2 263.8L286.0 267.4L286.2 268.7M304.1 239.2L306.8 242.0L308.9 242.0L308.9 248.6L304.8 253.1L305.6 256.4L309.6 259.2L310.7 263.2L314.1 265.9L317.6 265.5L313.9 270.1L311.8 270.1L306.8 272.5L305.4 277.0L308.6 286.0L307.2 289.5L310.5 294.8L310.5 301.6L309.1 307.0L308.4 308.3M313.9 270.1L315.5 273.3L318.0 272.9L317.1 279.3L321.0 278.2L324.0 279.1L327.6 277.8L330.4 281.2L330.4 284.5L333.5 287.5L333.3 292.3L332.0 292.6L324.2 292.8L321.9 295.4L323.3 299.6L323.9 302.3M332.0 292.6L334.9 293.9L340.4 291.2L340.0 299.9L334.4 302.5L335.6 305.4L331.7 304.8L329.4 306.7M340.4 291.2L340.2 288.2L338.4 285.2L332.0 276.7L327.4 274.0L331.3 271.4L329.9 269.1L324.2 268.4L321.2 262.2L317.6 265.5M321.2 262.2L327.6 261.9L332.6 258.8L337.4 260.5L337.0 263.8L339.7 265.3L342.2 265.5M313.9 321.0L317.5 323.9L321.0 321.7M347.9 336.7L347.9 338.3L351.1 341.0L355.7 340.4L356.9 338.8L362.1 339.6L365.3 338.8L367.2 333.9L369.2 329.1L376.0 329.1M459.3 353.2L459.3 376.5M270.2 142.7L274.1 148.4L281.2 154.7L281.6 163.4L290.6 164.7L297.2 167.9L300.8 175.5L313.6 176.0L320.0 176.8L331.0 180.8L340.0 177.0L346.6 177.0L355.9 170.9L356.0 164.2L361.9 165.7L369.4 162.2L371.5 157.3L375.4 156.5L384.3 156.0L379.3 149.2L376.8 148.9L368.8 149.2L372.9 138.9M270.2 142.7L276.9 138.7L286.2 133.6L293.3 135.0L304.0 139.5L307.5 135.0L306.4 130.0L313.2 126.8L321.4 130.8L321.6 134.8L332.4 135.6L337.4 136.4L343.8 141.7L351.6 142.8L359.1 140.9L364.4 136.7L372.9 138.9L376.8 140.9L382.2 136.2L385.0 128.8L387.3 123.6L384.7 119.2L397.5 117.7L404.6 120.7L411.3 136.7L420.2 144.1L422.7 150.5L429.1 150.5L436.9 147.1L431.2 163.9L426.6 162.9L424.8 172.4L422.4 177.2L419.9 174.6L413.3 179.2L409.2 180.4L400.1 188.6M406.4 198.9L409.6 196.4L414.4 195.0M799.6 143.6L899.7 143.6L899.7 141.5L901.6 145.2L905.9 145.7L910.9 147.3L915.2 147.9L919.8 148.9L923.7 147.3L936.5 155.3L937.4 157.1L940.8 158.9L941.1 160.4L944.7 162.9L945.0 174.3L942.5 178.2L944.0 180.6L957.1 175.1L957.1 172.1L964.9 171.3L966.7 168.4L971.3 164.7L972.4 164.4L983.8 164.4L986.3 162.4L988.0 159.9L989.1 155.8L992.0 151.9L995.2 152.4L996.9 153.9L996.9 160.9L998.2 162.9L999.6 163.9M736.7 -5.9L736.7 73.6L743.4 75.0L749.1 83.4L753.0 79.6L756.2 77.1L761.6 84.1L763.7 86.8L769.0 98.1L775.4 101.9L775.8 107.0L773.6 110.7M821.6 221.6L830.2 220.8L829.8 221.7L843.1 226.6L853.3 226.6L853.3 224.7L859.3 224.7L865.0 229.6L866.8 233.7L871.4 236.3L873.6 233.1L877.5 233.0L881.4 239.0L884.2 242.2L885.6 246.6L892.6 248.4M910.2 291.7L910.2 289.7L912.0 286.1L916.6 286.1L916.6 284.9L913.0 281.7L914.4 281.7L914.4 279.6L921.0 279.6L922.1 279.3L924.0 277.0M921.0 279.6L920.8 286.7L921.9 286.7M924.4 287.5L920.8 291.5L920.3 292.2L917.6 294.6M920.3 292.2L923.3 293.9L926.2 294.5L925.8 295.9M927.6 297.4L929.7 294.5L933.3 294.3L936.1 290.8L942.4 290.0M933.3 304.4L936.1 304.8L940.6 304.9M943.2 315.3L943.4 311.9L944.5 309.8M961.0 318.3L963.0 313.1M984.3 301.6L981.1 304.1L978.8 306.6L978.4 310.8L980.8 315.5L982.0 319.0L988.8 319.0L991.2 322.3L998.2 321.9L996.9 328.0L998.7 331.9L996.8 334.0L999.1 335.5L1000.3 339.6L999.4 338.0L989.8 338.0L989.6 340.2L992.3 341.7L988.9 342.0L988.9 344.7L991.2 347.9L989.3 358.9L986.6 357.5L988.9 353.6L978.8 352.7L976.0 348.4L970.3 344.5L966.7 342.6L962.6 342.6L957.8 338.8M970.3 344.5L969.2 349.5L965.5 353.1L959.4 356.1L958.4 360.2L956.9 361.8L952.5 359.8L952.5 356.1M989.3 358.9L978.8 362.3L975.1 370.2L978.6 376.1L981.3 379.7L987.0 377.9L987.0 383.4L990.6 383.2L993.9 388.8L992.7 393.0L991.4 397.2L992.7 402.4L990.9 407.2L987.8 410.4M990.9 407.2L992.8 412.6L994.6 414.5L993.6 418.3L995.5 421.5L996.8 427.5L999.8 427.9L1002.6 423.5L1009.4 427.5L1010.6 424.2L1015.2 425.2L1016.7 418.7L1027.9 414.0L1031.2 417.2M990.6 383.2L995.2 383.4L1001.0 379.4L1005.8 379.0L1005.6 385.9L1009.0 388.6L1014.7 390.6L1021.1 392.5L1023.6 396.5L1023.8 402.6L1030.4 402.8L1030.4 406.1L1033.6 409.1L1032.5 412.8L1031.2 417.2L1032.1 424.6L1040.0 425.4L1041.0 431.9L1044.9 432.1L1043.9 438.2L1043.3 442.4L1039.2 445.2L1029.6 445.0L1033.2 438.0L1024.7 431.9L1015.2 425.2M1043.9 438.2L1047.2 440.8L1046.7 444.4L1039.6 449.2L1033.2 456.7L1038.9 459.2L1040.3 459.4L1046.0 463.8L1049.2 467.1L1048.2 471.6M1033.2 456.7L1031.1 466.3L1030.4 472.3M999.8 427.9L998.7 431.9L994.4 433.9L995.2 443.4L990.2 449.8L989.1 457.5L988.0 463.8L989.8 469.7L987.3 477.9L985.2 483.6L985.6 493.9L983.1 499.4L982.7 508.8L983.1 518.6L983.8 526.1L982.7 533.3L980.2 541.7M1000.3 339.6L1005.1 341.3L1010.4 337.1L1012.8 336.2L1009.6 331.7L1008.3 329.2L1014.9 329.6L1021.1 328.0L1022.0 325.5L1019.7 322.8L1020.6 320.1L1024.8 314.4L1024.7 313.5M1022.0 325.5L1024.8 326.0L1026.3 329.9L1024.8 334.2L1025.6 337.4L1028.9 339.7L1037.1 337.1L1034.3 332.1L1032.1 326.9L1034.8 322.8M1037.1 337.1L1039.2 336.7L1043.9 335.6L1045.3 332.3L1044.4 326.6L1046.0 323.5M1043.9 335.6L1049.9 336.2L1054.4 329.6L1054.4 329.1M982.0 272.5L983.1 275.2L982.0 276.7L982.9 278.7" fill="none" stroke="#868686" stroke-width=".7" stroke-linejoin="round"/>
<path d="M-10.0 91.5L0.3 91.5L1.4 95.5L3.7 98.1L2.4 100.7L3.2 102.6L4.2 105.1L4.9 106.4L7.1 106.4L9.2 105.1L8.8 102.6L13.5 101.3L16.3 98.1L17.4 90.9L17.4 89.5L18.4 84.8L23.1 80.6L25.2 79.2L25.2 76.4L23.8 73.6L19.2 70.7L19.2 63.3L19.9 58.0L22.0 56.4L24.5 51.0L25.6 51.8L30.2 47.0L32.7 39.6L34.4 37.1L36.9 32.0L43.7 30.3L45.5 31.1L48.3 37.1L45.1 39.6L40.1 47.0L39.1 47.0L34.8 52.6L33.7 57.2L34.8 64.8L34.1 68.5L36.9 72.8L39.8 77.1L46.9 74.3L54.0 72.1L60.0 70.7L65.4 76.4L57.6 79.2L50.4 78.5L46.2 79.2L41.6 81.3L41.6 85.5L45.1 86.8L44.8 90.2L43.7 96.1L40.5 95.5L38.4 91.2L34.8 92.2L33.0 96.1L32.7 99.4L33.0 104.5L32.7 107.0L29.1 109.5L27.7 112.6L24.5 112.6L23.4 110.1L18.4 110.7L14.9 113.2L8.8 115.0L6.0 111.3L0.7 113.8L-3.2 115.0L-10.0 115.0ZM61.5 183.0L57.6 179.6L55.8 176.8L57.2 173.4L59.9 168.4L63.6 163.4L67.3 156.8L70.0 156.3L71.8 156.8L73.6 158.9L77.5 159.1L73.6 162.7L76.8 163.4L77.1 166.5L78.0 167.4L79.6 167.0L83.9 164.2L87.8 162.7L88.1 163.9L90.6 165.0L92.4 166.0L96.8 168.9L99.2 171.4L103.8 174.3L106.1 178.4L105.9 180.8L99.2 183.9L94.5 184.1L87.1 182.5L83.0 178.9L78.0 179.2L71.1 181.8L65.7 183.0ZM87.4 162.7L83.9 162.9L82.4 160.9L81.7 158.6L83.5 157.3L88.8 155.5L91.5 153.7L96.3 153.2L97.7 153.7L94.2 155.8L93.6 159.1L92.0 161.4L91.0 162.9L88.8 162.4ZM52.9 186.5L55.8 184.1L57.6 183.9L61.1 183.9L64.3 185.1L61.1 186.7L56.8 187.0L54.0 186.7ZM128.0 160.4L130.4 158.3L133.3 156.8L136.5 155.8L140.0 154.7L144.0 154.2L146.8 155.3L147.2 159.4L148.6 160.7L152.1 161.4L152.8 162.7L148.6 163.2L144.7 162.4L140.4 162.9L139.3 165.0L141.5 166.7L136.8 166.2L139.9 171.2L141.8 173.6L144.3 175.5L145.6 177.2L144.7 179.6L146.1 183.0L146.3 186.3L146.4 188.6L146.8 191.4L149.3 193.2L149.6 200.4L150.0 202.7L146.4 202.9L145.2 203.5L140.8 203.8L138.1 202.7L134.4 200.2L131.9 195.7L131.9 194.3L132.9 191.8L133.6 188.8L135.4 187.0L137.2 186.7L134.7 185.8L132.8 183.4L129.7 178.9L127.1 174.6L127.2 170.9L124.4 166.0L124.8 161.9ZM145.9 182.3L148.6 179.9L152.1 180.6L152.8 183.4L151.1 185.8L147.2 185.3L145.9 184.4ZM168.8 162.9L169.9 163.2L170.6 166.0L169.6 166.5ZM165.6 161.4L167.1 161.4L167.8 166.5L166.7 167.9L166.0 165.5ZM219.3 161.9L222.2 157.8L226.4 155.8L231.8 155.8L237.1 155.3L239.6 156.3L237.1 157.8L230.0 157.8L225.7 158.3L223.2 161.4L221.8 164.4L219.7 163.9ZM228.9 177.0L232.5 175.3L236.4 176.3L232.8 178.4ZM326.7 129.1L330.6 127.1L334.9 121.0L340.2 115.6L344.8 108.9L347.7 103.5L349.1 105.1L347.0 111.3L343.4 117.4L339.2 122.1L333.5 126.8L329.2 130.2ZM67.9 76.1L65.4 70.7L67.9 64.4L72.5 66.3L75.3 69.2L73.9 74.3L70.4 75.7ZM80.7 68.5L80.3 63.3L82.4 55.7L84.9 58.8L87.4 64.0L84.6 68.9ZM2.1 83.4L4.6 80.3L7.8 82.0L5.6 85.8L2.8 86.5ZM8.1 86.1L10.6 84.8L10.3 89.5L8.5 91.2ZM54.0 83.4L56.8 82.7L56.1 87.5L58.3 90.2L55.8 89.5ZM118.0 185.8L119.4 186.5L120.1 187.9L118.7 187.2ZM194.8 184.4L197.3 183.4L199.8 184.6L196.9 185.5ZM108.8 195.0L112.0 193.4L113.0 195.5L110.2 196.1ZM70.7 346.8L72.1 343.3L76.4 342.6L79.6 343.6L79.2 347.2L78.5 351.1L75.3 353.6L71.8 353.2L70.7 350.4ZM61.8 356.1L63.6 356.1L64.3 361.8L66.8 367.2L68.9 374.3L66.8 375.1L65.0 370.7L62.9 366.4L61.8 361.8ZM78.9 378.3L81.0 378.3L82.1 385.2L81.7 388.8L83.2 395.0L81.4 395.7L80.0 390.6L79.6 385.2ZM85.6 328.0L86.7 328.0L88.5 333.3L87.8 335.5L86.4 332.6ZM66.1 340.1L69.3 335.8L69.8 336.2L67.9 340.1ZM54.0 408.7L60.8 403.5L61.1 404.2L55.1 409.1ZM312.1 202.7L314.3 201.3L316.4 202.7L314.6 204.0ZM427.3 166.5L428.8 162.9L430.5 164.4L429.5 167.0ZM326.7 296.6L328.8 297.4L329.9 299.2L328.1 298.5ZM910.5 155.5L914.4 154.7L916.6 156.3L919.8 155.0L923.3 155.3L924.4 151.9L926.5 154.7L928.7 156.8L935.8 156.8L937.2 156.8L936.8 152.6L932.9 149.2L930.1 144.9L924.4 144.1L920.5 148.9L915.2 152.6ZM925.8 179.2L926.9 180.8L929.0 180.4L931.2 175.3L930.4 169.4L934.0 164.4L935.8 160.7L932.2 159.6L928.7 160.9L926.5 164.4L925.1 166.7L926.7 168.4L925.8 174.3ZM936.8 159.6L941.1 158.9L944.7 159.6L948.9 159.4L953.6 164.4L954.3 165.5L950.4 166.5L948.9 163.2L947.5 167.4L947.3 172.9L945.0 174.3L944.7 170.4L941.8 169.7L939.7 171.2L941.8 164.4ZM941.1 180.6L944.7 182.0L948.9 180.4L953.6 178.4L957.5 175.1L952.8 175.3L948.2 176.3L944.7 178.9L942.5 178.7ZM954.3 172.9L957.1 173.1L962.4 173.1L967.1 171.6L966.7 168.7L962.4 169.7L957.5 170.2ZM893.5 135.9L895.6 134.2L895.2 129.1L892.4 121.6L889.9 116.2L886.4 116.2L885.3 119.8L888.1 123.3L889.6 127.4L893.1 130.8ZM889.2 136.4L886.4 132.5L884.2 128.0L881.4 121.6L883.2 121.0L884.9 126.8L887.8 131.4L889.6 134.8ZM842.3 85.5L846.9 82.0L854.0 79.9L861.1 81.3L854.0 82.7L846.9 84.8ZM872.5 100.0L875.3 90.2L877.1 90.2L875.7 99.4ZM822.0 68.5L823.8 64.8L829.1 60.3L834.4 59.5L841.6 54.1L848.7 54.5L848.7 56.4L841.6 59.5L839.1 64.8L834.4 67.8L827.3 69.6ZM794.3 31.1L800.7 25.0L806.0 19.6L813.1 20.1L819.5 24.1L817.7 32.0L812.0 34.6L807.8 32.9L806.7 37.9L802.4 36.3L801.7 29.4L797.8 32.4ZM921.2 141.4L923.0 136.4L925.1 138.1L924.8 141.4ZM980.2 26.8L983.8 21.4L989.8 22.3L988.0 26.8L983.8 28.5ZM982.0 34.6L985.6 35.4L987.3 38.8L983.8 39.6ZM1023.6 118.6L1026.4 116.8L1030.7 114.1L1029.3 115.9L1026.4 118.0ZM932.6 300.7L935.1 301.4L936.5 304.3L934.7 304.3L932.9 302.5ZM983.4 305.0L985.2 307.2L985.6 310.1L983.4 311.5L982.0 309.7L982.4 306.8ZM989.1 399.8L990.9 399.4L993.4 402.8L991.6 403.5ZM1057.0 457.1L1056.7 460.9L1053.1 464.2L1052.4 463.4L1055.6 458.4L1056.3 456.3ZM836.6 180.6L838.7 181.5L839.4 184.8L837.3 184.4ZM949.6 243.6L951.2 243.6L951.2 245.2L950.0 245.2ZM684.0 79.9L690.4 76.8L690.8 78.2L685.1 80.6Z" fill="#c5e7fe"/>
<rect x="278" y="0" width="1" height="533" fill="#8a9aa8" opacity=".07"/>
<rect x="598" y="0" width="1" height="533" fill="#8a9aa8" opacity=".07"/>
<rect x="918" y="0" width="1" height="533" fill="#8a9aa8" opacity=".07"/>
<path d="M0 344.8 H1163" stroke="#b78a93" stroke-width="1.5" stroke-dasharray="7.8 3.4" fill="none"/>
<path d="M632.9 -1.0L637.7 10.1L637.7 31.9L563.1 121.2L598.0 148.9L598.0 350.6L669.9 350.6L669.9 338.2L658.8 338.2L658.8 324.4L683.3 324.4L708.4 386.5L691.4 386.5L691.4 374.1L638.8 374.1L630.0 382.3L630.0 396.3L624.4 404.2L624.4 521.2L617.0 534.0" stroke="#9b444b" stroke-width=".95" stroke-dasharray="7.5 3.2" fill="none"/>
<text x="243.3" y="422.3" font-size="14.6" fill="#1a66c9" text-anchor="middle" letter-spacing="2.3" font-weight="normal" stroke="#fff" stroke-opacity=".85" stroke-width="0" paint-order="stroke" stroke-linejoin="round">Indian</text>
<text x="243.3" y="439.3" font-size="14.6" fill="#1a66c9" text-anchor="middle" letter-spacing="2.3" font-weight="normal" stroke="#fff" stroke-opacity=".85" stroke-width="0" paint-order="stroke" stroke-linejoin="round">Ocean</text>
<text x="646.3" y="194.5" font-size="14.6" fill="#1a66c9" text-anchor="middle" letter-spacing="2.3" font-weight="normal" stroke="#fff" stroke-opacity=".85" stroke-width="0" paint-order="stroke" stroke-linejoin="round">North</text>
<text x="646.3" y="210.8" font-size="14.6" fill="#1a66c9" text-anchor="middle" letter-spacing="2.3" font-weight="normal" stroke="#fff" stroke-opacity=".85" stroke-width="0" paint-order="stroke" stroke-linejoin="round">Pacific</text>
<text x="646.3" y="227.1" font-size="14.6" fill="#1a66c9" text-anchor="middle" letter-spacing="2.3" font-weight="normal" stroke="#fff" stroke-opacity=".85" stroke-width="0" paint-order="stroke" stroke-linejoin="round">Ocean</text>
<text x="751.6" y="443.8" font-size="14.6" fill="#1a66c9" text-anchor="middle" letter-spacing="2.3" font-weight="normal" stroke="#fff" stroke-opacity=".85" stroke-width="0" paint-order="stroke" stroke-linejoin="round">South</text>
<text x="751.6" y="460.0" font-size="14.6" fill="#1a66c9" text-anchor="middle" letter-spacing="2.3" font-weight="normal" stroke="#fff" stroke-opacity=".85" stroke-width="0" paint-order="stroke" stroke-linejoin="round">Pacific</text>
<text x="751.6" y="476.3" font-size="14.6" fill="#1a66c9" text-anchor="middle" letter-spacing="2.3" font-weight="normal" stroke="#fff" stroke-opacity=".85" stroke-width="0" paint-order="stroke" stroke-linejoin="round">Ocean</text>
<text x="1093.5" y="201.9" font-size="14.6" fill="#1a66c9" text-anchor="middle" letter-spacing="2.3" font-weight="normal" stroke="#fff" stroke-opacity=".85" stroke-width="0" paint-order="stroke" stroke-linejoin="round">North</text>
<text x="1093.5" y="218.8" font-size="14.6" fill="#1a66c9" text-anchor="middle" letter-spacing="2.3" font-weight="normal" stroke="#fff" stroke-opacity=".85" stroke-width="0" paint-order="stroke" stroke-linejoin="round">Atlantic</text>
<text x="1093.5" y="235.7" font-size="14.6" fill="#1a66c9" text-anchor="middle" letter-spacing="2.3" font-weight="normal" stroke="#fff" stroke-opacity=".85" stroke-width="0" paint-order="stroke" stroke-linejoin="round">Ocean</text>
<text x="1152.5" y="457.8" font-size="14.6" fill="#1a66c9" text-anchor="start" letter-spacing="2.3" font-weight="normal" stroke="#fff" stroke-opacity=".85" stroke-width="0" paint-order="stroke" stroke-linejoin="round">Atlantic</text>
<text x="1158.0" y="474.3" font-size="14.6" fill="#1a66c9" text-anchor="start" letter-spacing="2.3" font-weight="normal" stroke="#fff" stroke-opacity=".85" stroke-width="0" paint-order="stroke" stroke-linejoin="round">Ocean</text>
</svg>
<div class="ml" style="left:51.5px;top:16.8px">Finland</div>
<div class="ml" style="left:20.0px;top:43.1px">Sweden</div>
<div class="ml" style="left:24.4px;top:123.0px">Poland</div>
<div class="ml" style="left:74.0px;top:141.6px">Ukraine</div>
<div class="ml" style="left:198.0px;top:149.4px">Kazakhstan</div>
<div class="ml" style="left:292.0px;top:61.2px">Russia</div>
<div class="ml" style="left:324.7px;top:157.3px">Mongolia</div>
<div class="ml" style="left:84.8px;top:195.2px">Türkiye</div>
<div class="ml" style="left:327.3px;top:202.0px">China</div>
<div class="ml" style="left:457.4px;top:194.2px">Japan</div>
<div class="ml" style="left:409.7px;top:207.0px">South Korea</div>
<div class="ml" style="left:111.0px;top:221.7px">Iraq</div>
<div class="ml" style="left:150.9px;top:226.8px">Iran</div>
<div class="ml" style="left:64.3px;top:240.3px">Egypt</div>
<div class="ml" style="left:20.5px;top:245.8px">Libya</div>
<div class="ml" style="left:119.5px;top:259.6px">Saudi Arabia</div>
<div class="ml" style="left:241.0px;top:261.2px">India</div>
<div class="ml" style="left:317.8px;top:273.0px">Thailand</div>
<div class="ml" style="left:65.9px;top:284.4px">Sudan</div>
<div class="ml" style="left:27.0px;top:295.8px">Chad</div>
<div class="ml" style="left:99.2px;top:315.1px">Ethiopia</div>
<div class="ml" style="left:93.3px;top:343.5px">Kenya</div>
<div class="ml" style="left:39.0px;top:351.4px">DRC</div>
<div class="ml" style="left:90.7px;top:368.4px">Tanzania</div>
<div class="ml" style="left:370.8px;top:360.2px">Indonesia</div>
<div class="ml" style="left:481.9px;top:362.5px">Papua New</div>
<div class="ml" style="left:481.9px;top:373.9px">Guinea</div>
<div class="ml" style="left:17.3px;top:389.9px">Angola</div>
<div class="ml" style="left:44.6px;top:430.8px">Botswana</div>
<div class="ml" style="left:129.0px;top:423.3px">Madagascar</div>
<div class="ml" style="left:28.5px;top:472.0px">South Africa</div>
<div class="ml" style="left:435.5px;top:437.1px">Australia</div>
<div class="ml" style="left:550.5px;top:497.1px">New</div>
<div class="ml" style="left:550.5px;top:508.2px">Zealand</div>
<div class="ml" style="left:864.0px;top:112.8px">Canada</div>
<div class="ml" style="left:879.0px;top:191.6px">United States</div>
<div class="ml" style="left:873.5px;top:258.3px">Mexico</div>
<div class="ml" style="left:1003.2px;top:316.1px">Venezuela</div>
<div class="ml" style="left:968.2px;top:332.4px">Colombia</div>
<div class="ml" style="left:1040.1px;top:376.5px">Brazil</div>
<div class="ml" style="left:966.9px;top:385.4px">Peru</div>
<div class="ml" style="left:1008.1px;top:406.0px">Bolivia</div>
<div class="ml" style="left:988.5px;top:444.5px">Chile</div>
<div class="ml" style="left:1017.2px;top:496.5px">Argentina</div>
<div class="ml" style="left:199.5px;top:216.1px">Afghanistan</div>
<div class="ml" style="left:203.0px;top:236.3px">Pakistan</div>
<div class="ml r" style="left:7.0px;top:70.3px">Norway</div>
<div class="ml r" style="left:17.5px;top:142.6px">Germany</div>
<div class="ml r" style="left:12.0px;top:174.6px">Italy</div>
<div class="ml r" style="left:7.5px;top:280.8px">Niger</div>
<div class="ml r" style="left:4.0px;top:311.8px">Nigeria</div>
<div class="ml r" style="left:36.0px;top:415.8px">Namibia</div>
<div class="ml l" style="left:1153px;top:37px">Iceland</div>
<div class="mk" style="left:173.5px;top:231.5px;background:#c8c8c8;"><i></i></div>
<div class="mk" style="left:195.5px;top:195.5px;background:#c8c8c8;"><i></i></div>
<div class="mk" style="left:213.0px;top:275.0px;background:#c8c8c8;"><i></i></div>
<div class="mk" style="left:209.5px;top:283.0px;background:#595959;"><i></i></div>
<div class="mk" style="left:265.79999999999995px;top:206.5px;background:#fdb525;"><b style="position:absolute;left:16.6px;top:15px;width:5.6px;height:15px;background:#fff;border-radius:1px"></b><b style="position:absolute;left:25.3px;top:15px;width:5.6px;height:15px;background:#fff;border-radius:1px"></b></div>
<div class="mk" style="left:836.5px;top:104.80000000000001px;background:#c8c8c8;"><i></i></div>
<div class="mk" style="left:410.0px;top:428.5px;background:#c8c8c8;"><i></i></div>
<div class="tag" style="left:125px;top:335.70000000000005px;width:213.5px"><div class="" style="left:0px;top:6.0px;font-size:15.2px;line-height:18px;color:#fff;font-weight:bold;letter-spacing:0.137px;position:static;display:inline-block;">Vivek_AABL36QC010059</div></div>
<div class="tag" style="left:336.70000000000005px;top:481.9px;width:193px"><div class="" style="left:0px;top:6.0px;font-size:15.2px;line-height:18px;color:#fff;font-weight:bold;letter-spacing:-0.295px;position:static;display:inline-block;">ACEA11ED230116_PVT</div></div>
<div class="badge" style="left:770.3px;top:162.89999999999998px;width:61px">97</div>
<div class="badge" style="left:814.5999999999999px;top:166.60000000000002px;width:61.3px">15</div>
<div class="badge" style="left:916.2px;top:136.8px;width:75.3px">103</div>
<div class="badge" style="left:891.4000000000001px;top:186.2px;width:62.3px">28</div>
<div class="ctl" style="top:14.5px;height:46px"></div>
<div class="ctl" style="top:75.3px;height:89.8px"><div style="position:absolute;left:0;top:44.6px;width:100%;height:1px;background:#e6e6e6"></div></div>
<div class="ctl" style="top:180.3px;height:89.9px"><div style="position:absolute;left:0;top:44.2px;width:100%;height:1px;background:#e6e6e6"></div></div>
<svg style="left:1120.3px;top:25.5px" width="24" height="24" viewBox="0 0 24 24"><g fill="none" stroke="#666" stroke-width="1.25" stroke-linejoin="round"><path d="M12 3.5 L20.5 8 L12 12.5 L3.5 8 Z"/><path d="M3.5 12 L12 16.5 L20.5 12"/><path d="M3.5 16 L12 20.5 L20.5 16"/></g></svg>
<svg style="left:1120.3px;top:86.30000000000001px" width="24" height="24" viewBox="0 0 24 24"><path d="M12 2.5 V21.5 M2.5 12 H21.5" stroke="#666" stroke-width="1.4" fill="none"/></svg>
<svg style="left:1120.3px;top:131.7px" width="24" height="24" viewBox="0 0 24 24"><path d="M2.5 12 H21.5" stroke="#666" stroke-width="1.4" fill="none"/></svg>
<svg style="left:1120.3px;top:191.39999999999998px" width="24" height="24" viewBox="0 0 24 24"><g fill="none" stroke="#666" stroke-width="1.4"><path d="M3 8 V3.8 Q3 3 3.8 3 H8 M16 3 H20.2 Q21 3 21 3.8 V8 M21 16 V20.2 Q21 21 20.2 21 H16 M8 21 H3.8 Q3 21 3 20.2 V16"/></g></svg>
<svg style="left:1120.3px;top:235.5px" width="24" height="26" viewBox="0 0 24 26"><g><circle cx="12" cy="4.6" r="3.6" fill="#f5b324"/><path d="M6.2 9.6 Q6.2 8.6 7.4 8.6 H16.6 Q17.8 8.6 17.8 9.6 L16.6 16.2 H15.4 L14.8 24.5 H12.6 L12 18.5 L11.4 24.5 H9.2 L8.6 16.2 H7.4 Z" fill="#f5b324"/><path d="M9.3 8.6 L12 13.2 L14.7 8.6 Z" fill="#e8902a"/></g></svg>
</div>
<div class="abs" style="left:243px;top:291px;width:500px;height:3px;background:linear-gradient(to bottom,rgba(0,0,0,0) 0,rgba(0,0,0,.09) 50%,rgba(0,0,0,.03) 80%,rgba(0,0,0,0) 100%)"></div><div class="abs" style="left:743px;top:293px;width:1px;height:533px;background:#dedede"></div>
</div>
</body>
</html>
